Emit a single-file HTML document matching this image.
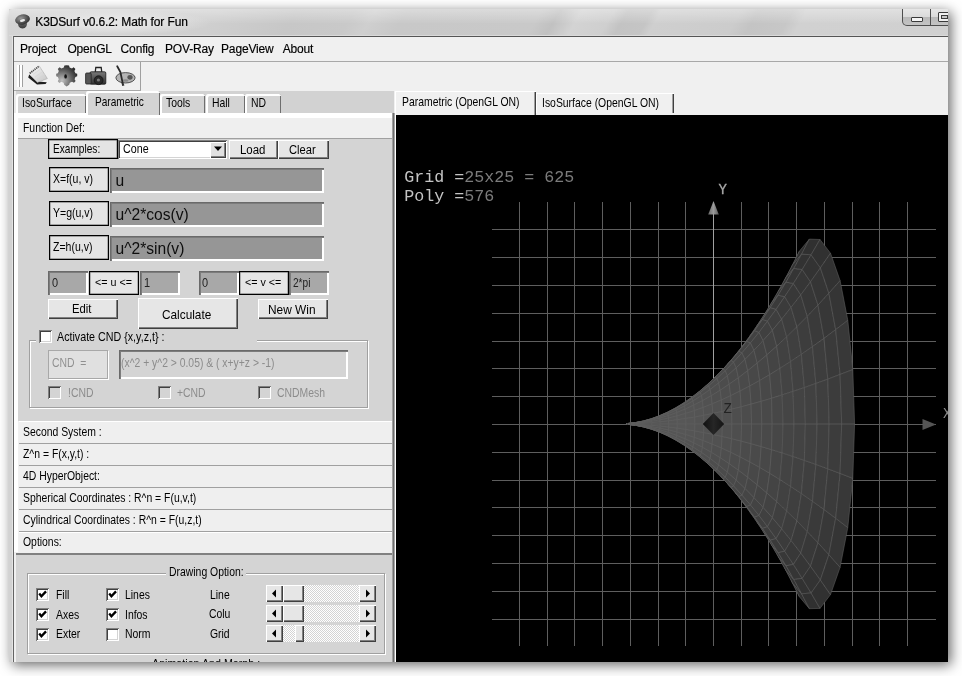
<!DOCTYPE html>
<html><head><meta charset="utf-8"><style>
html,body{margin:0;padding:0;width:962px;height:676px;overflow:hidden;background:#fff;position:relative;}
body{filter:grayscale(1);}
body>div,body>svg{position:absolute;box-sizing:border-box;}
.t{position:absolute;white-space:pre;line-height:1;font-family:"Liberation Sans",sans-serif;}
</style></head><body>
<div style="left:9px;top:9px;width:939px;height:653px;background:#d4d4d4;box-shadow:3px 3px 12px 0px rgba(0,0,0,0.6);"></div>
<div style="left:9px;top:9px;width:939px;height:27px;background:linear-gradient(120deg, #d4d4d4 0px, #cfcfcf 180px, #c7c7c7 250px, #c9c9c9 300px, #cfcfcf 318px, #c8c8c8 345px, #c9c9c9 462px, #c1c1c1 478px, #d3d3d3 497px, #cfcfcf 525px, #c3c3c3 537px, #c5c5c5 558px, #cfcfcf 566px, #cccccc 635px, #c4c4c4 650px, #c7c7c7 680px, #d1d1d1 692px, #d0d0d0 826px);box-shadow:inset 0 -1px 0 #dadada;"></div>
<div style="left:9px;top:9px;width:939px;height:27px;background:linear-gradient(to bottom, rgba(255,255,255,0.35), rgba(255,255,255,0) 55%);border-radius:3px 3px 0 0;"></div>
<div style="left:20px;top:10px;width:190px;height:25px;background:radial-gradient(ellipse at center, rgba(235,235,235,0.7) 30%, rgba(235,235,235,0) 72%);"></div>
<div style="left:9px;top:36px;width:4px;height:626px;background:#d2d2d2"></div>
<div style="left:13px;top:36px;width:935px;height:626px;background:#f0f0f0;box-shadow:inset 1px 0 0 #646464, inset 0 1px 0 #555;"></div>
<div style="left:12px;top:36px;width:1px;height:626px;background:#e4e4e4"></div>
<svg style="left:14px;top:13px" width="17" height="17" viewBox="0 0 17 17">
<defs><radialGradient id="ic1" cx="0.4" cy="0.35" r="0.7"><stop offset="0" stop-color="#9a9a9a"/><stop offset="1" stop-color="#2a2a2a"/></radialGradient>
<linearGradient id="ic2" x1="0" y1="0" x2="0" y2="1"><stop offset="0" stop-color="#6a6a6a"/><stop offset="1" stop-color="#3a3a3a"/></linearGradient></defs>
<path d="M4 9 Q3.5 15 8.5 15.5 Q13.5 15 13 9 Z" fill="url(#ic2)"/>
<ellipse cx="8.5" cy="6.5" rx="7.5" ry="5" fill="url(#ic1)" transform="rotate(-12 8.5 6.5)"/>
<ellipse cx="8.5" cy="7.5" rx="2.6" ry="1.3" fill="#e8e8e8" transform="rotate(-12 8.5 7.5)"/>
</svg>
<span class="t" style="left:35.3px;top:15.84px;font-size:12px;color:#000;font-family:'Liberation Sans', sans-serif;letter-spacing:-0.13px;-webkit-text-stroke:0.2px #000;">K3DSurf v0.6.2: Math for Fun</span>
<div style="left:902px;top:9px;width:29px;height:17px;border:1px solid #4e4e4e;border-top:none;border-radius:0 0 0 5px;background:linear-gradient(#e6e6e6,#dadada 50%,#b9b9b9 51%,#c4c4c4);"></div>
<div style="left:930px;top:9px;width:18px;height:17px;border-bottom:1px solid #4e4e4e;border-left:1px solid #4e4e4e;background:linear-gradient(#e6e6e6,#dadada 50%,#b9b9b9 51%,#c4c4c4);"></div>
<div style="left:911px;top:17px;width:12px;height:5px;border:1px solid #3a3a3a;border-radius:1px;background:#f4f4f4;"></div>
<div style="left:930px;top:9px;width:18px;height:17px;overflow:hidden"><div style="position:absolute;left:8px;top:3px;width:12px;height:10px;border:1px solid #3a3a3a;border-radius:1px;background:#f0f0f0;box-sizing:border-box"></div><div style="position:absolute;left:11px;top:6px;width:7px;height:4px;border:1px solid #3a3a3a;background:#c8c8c8;box-sizing:border-box"></div></div>
<div style="left:14px;top:61px;width:934px;height:1px;background:#a8a8a8"></div>
<span class="t" style="left:20px;top:43.04px;font-size:12px;color:#000;font-family:'Liberation Sans', sans-serif;letter-spacing:-0.15px;-webkit-text-stroke:0.15px #000;">Project</span>
<span class="t" style="left:67.4px;top:43.04px;font-size:12px;color:#000;font-family:'Liberation Sans', sans-serif;letter-spacing:-0.15px;-webkit-text-stroke:0.15px #000;">OpenGL</span>
<span class="t" style="left:120.6px;top:43.04px;font-size:12px;color:#000;font-family:'Liberation Sans', sans-serif;letter-spacing:-0.15px;-webkit-text-stroke:0.15px #000;">Config</span>
<span class="t" style="left:165px;top:43.04px;font-size:12px;color:#000;font-family:'Liberation Sans', sans-serif;letter-spacing:-0.15px;-webkit-text-stroke:0.15px #000;">POV-Ray</span>
<span class="t" style="left:221px;top:43.04px;font-size:12px;color:#000;font-family:'Liberation Sans', sans-serif;letter-spacing:-0.15px;-webkit-text-stroke:0.15px #000;">PageView</span>
<span class="t" style="left:282.7px;top:43.04px;font-size:12px;color:#000;font-family:'Liberation Sans', sans-serif;letter-spacing:-0.15px;-webkit-text-stroke:0.15px #000;">About</span>
<div style="left:14px;top:62px;width:127px;height:29px;border-right:1px solid #a0a0a0;border-bottom:1px solid #a0a0a0;"></div>
<div style="left:17px;top:65px;width:2px;height:22px;background:#fff;box-shadow:1px 0 0 #a0a0a0"></div>
<div style="left:20px;top:65px;width:2px;height:22px;background:#fff;box-shadow:1px 0 0 #a0a0a0"></div>
<svg style="left:24px;top:62px" width="116" height="28" viewBox="24 62 116 28">
<defs>
<linearGradient id="np" x1="0" y1="0" x2="1" y2="1"><stop offset="0" stop-color="#fafafa"/><stop offset="1" stop-color="#c4c4c4"/></linearGradient>
<radialGradient id="gr" cx="0.28" cy="0.72" r="0.95"><stop offset="0" stop-color="#c0c0c0"/><stop offset="0.5" stop-color="#606060"/><stop offset="1" stop-color="#0a0a0a"/></radialGradient>
<linearGradient id="cm" x1="0" y1="0" x2="0" y2="1"><stop offset="0" stop-color="#7a7a7a"/><stop offset="1" stop-color="#303030"/></linearGradient>
</defs>
<path d="M28.2 77.5 L37 84.6 L45.6 84 L46.8 82.2 L37.6 81.4 L29.2 74.6 Z" fill="#1e1e1e"/>
<path d="M29.2 74.2 L39.4 66.2 L47.4 78.6 L37.4 82.4 Z" fill="url(#np)" stroke="#a0a0a0" stroke-width="0.5"/>
<path d="M29.8 73.2 L39.2 66" stroke="#444" stroke-width="1.8" stroke-dasharray="1.1 0.9"/>
<path d="M33 74.4 L41 68.8 M35 77 L43 71.6 M37 79.6 L45 74.4" stroke="#d4d4d4" stroke-width="0.6"/>
<path d="M66.7 65.3 L69 65.6 L69.6 67.6 L72 68.6 L73.6 67.3 L75.4 69 L74.4 70.9 L75.4 73.2 L77.2 73.8 L77.2 76.3 L75.4 77 L74.6 79.2 L75.6 81 L74 82.8 L72 81.8 L69.8 82.8 L69.2 84.8 L66.6 86.4 L64.2 84.8 L63.6 82.8 L61.4 81.8 L59.4 83 L57.8 81.2 L58.8 79.2 L57.9 77 L56.2 76.3 L56.2 73.8 L57.9 73.2 L58.8 70.9 L57.8 69 L59.6 67.3 L61.4 68.6 L63.8 67.6 L64.4 65.6 Z" fill="url(#gr)"/>
<ellipse cx="65.6" cy="76.4" rx="1.3" ry="2.2" fill="#111"/>
<path d="M95.2 72.5 L95.8 67.5 L101.2 67.5 L101.8 72.5 Z" fill="none" stroke="#222" stroke-width="1.3"/>
<rect x="90" y="71.8" width="15.8" height="12.4" rx="1.2" fill="url(#cm)" stroke="#1a1a1a" stroke-width="0.8"/>
<rect x="85.6" y="73" width="5.6" height="11" rx="1" fill="#555" stroke="#222" stroke-width="0.8"/>
<circle cx="98.6" cy="80.2" r="4.4" fill="#2a2a2a" stroke="#111" stroke-width="0.8"/>
<circle cx="98.4" cy="80" r="1.6" fill="#777"/>
<ellipse cx="125.5" cy="77.8" rx="9.6" ry="5.2" fill="#b4b4b4" stroke="#444" stroke-width="0.9"/>
<ellipse cx="130" cy="77.3" rx="2.6" ry="2.4" fill="#555"/>
<ellipse cx="125.5" cy="80.5" rx="3" ry="1.2" fill="#8a8a8a"/>
<path d="M117.2 66.2 L120.4 72 L123 84.6" fill="none" stroke="#2a2a2a" stroke-width="1.8" stroke-linecap="round"/>
<path d="M121.2 81.5 L124.6 85.2 L122.2 86" fill="#333"/>
</svg>
<div style="left:14px;top:90px;width:127px;height:1px;background:#a8a8a8"></div>
<div style="left:16px;top:91px;width:378px;height:22px;background:#d2d2d2"></div>
<div style="left:14px;top:91px;width:2px;height:22px;background:#ececec"></div>
<div style="left:16px;top:93.5px;width:70px;height:19.5px;background:#d4d4d4;border-radius:2px 2px 0 0;box-shadow:inset 2px 2px 0 #fff, inset -1px 0 0 #6e6e6e;"></div>
<div style="left:159.5px;top:93.5px;width:45px;height:19.5px;background:#d4d4d4;border-radius:2px 2px 0 0;box-shadow:inset 2px 2px 0 #fff, inset -1px 0 0 #6e6e6e;"></div>
<div style="left:205.5px;top:93.5px;width:39px;height:19.5px;background:#d4d4d4;border-radius:2px 2px 0 0;box-shadow:inset 2px 2px 0 #fff, inset -1px 0 0 #6e6e6e;"></div>
<div style="left:245px;top:93.5px;width:36px;height:19.5px;background:#d4d4d4;border-radius:2px 2px 0 0;box-shadow:inset 2px 2px 0 #fff, inset -1px 0 0 #6e6e6e;"></div>
<div style="left:14px;top:113px;width:380px;height:5px;background:#fff"></div>
<div style="left:86px;top:91px;width:73.5px;height:24px;background:#d4d4d4;border-radius:2px 2px 0 0;box-shadow:inset 2px 2px 0 #fff, inset -1px 0 0 #6e6e6e;"></div>
<span class="t" style="left:21.8px;top:97.73px;font-size:11.9px;color:#000;font-family:'Liberation Sans', sans-serif;transform:scaleX(0.875);transform-origin:0 0;">IsoSurface</span>
<span class="t" style="left:94.6px;top:96.53px;font-size:11.9px;color:#000;font-family:'Liberation Sans', sans-serif;transform:scaleX(0.85);transform-origin:0 0;">Parametric</span>
<span class="t" style="left:165.7px;top:98.13px;font-size:11.9px;color:#000;font-family:'Liberation Sans', sans-serif;transform:scaleX(0.875);transform-origin:0 0;">Tools</span>
<span class="t" style="left:212.4px;top:98.13px;font-size:11.9px;color:#000;font-family:'Liberation Sans', sans-serif;transform:scaleX(0.875);transform-origin:0 0;">Hall</span>
<span class="t" style="left:250.8px;top:98.13px;font-size:11.9px;color:#000;font-family:'Liberation Sans', sans-serif;transform:scaleX(0.875);transform-origin:0 0;">ND</span>
<div style="left:392px;top:113px;width:1px;height:549px;background:#a0a0a0"></div>
<div style="left:393px;top:113px;width:1px;height:549px;background:#6e6e6e"></div>
<div style="left:394px;top:113px;width:1px;height:549px;background:#a8a8a8"></div>
<div style="left:395px;top:91px;width:1px;height:571px;background:#fff"></div>
<div style="left:14px;top:113px;width:4px;height:439px;background:#fff"></div>
<div style="left:19px;top:118px;width:373px;height:20px;background:#efefef"></div>
<span class="t" style="left:23.4px;top:123.33px;font-size:11.9px;color:#000;font-family:'Liberation Sans', sans-serif;transform:scaleX(0.875);transform-origin:0 0;">Function Def:</span>
<div style="left:18px;top:138px;width:374px;height:283px;background:#d4d4d4;border-top:1px solid #a0a0a0"></div>
<div style="left:48px;top:139px;width:70px;height:20px;background:#e4e4e4;box-shadow:inset 0 0 0 1px #000, inset 0 0 0 1.4px #606060;"></div>
<span class="t" style="left:52.5px;top:144.13px;font-size:11.9px;color:#000;font-family:'Liberation Sans', sans-serif;transform:scaleX(0.85);transform-origin:0 0;">Examples:</span>
<div style="left:118px;top:139.5px;width:109px;height:19.5px;background:#fff;box-shadow:inset 1px 1px 0 #808080, inset -1px -1px 0 #fff, inset 2px 2px 0 #404040, inset -2px -2px 0 #d4d4d4;"></div>
<div style="left:210px;top:141.5px;width:16px;height:16px;background:#e0e0e0;box-shadow:inset 1px 1px 0 #fff, inset -1px -1px 0 #404040, inset -2px -2px 0 #808080;"></div>
<svg style="left:213px;top:146px" width="10" height="6"><path d="M1 0.5 L9 0.5 L5 5 Z" fill="#000"/></svg>
<span class="t" style="left:123px;top:144.13px;font-size:11.9px;color:#000;font-family:'Liberation Sans', sans-serif;transform:scaleX(0.9);transform-origin:0 0;">Cone</span>
<div style="left:228.5px;top:139.5px;width:49px;height:19.5px;background:#e6e6e6;box-shadow:inset 1px 1px 0 #fff, inset -1px -1px 0 #404040, inset -2px -2px 0 #808080;"></div>
<div style="left:277.5px;top:139.5px;width:51px;height:19.5px;background:#e6e6e6;box-shadow:inset 1px 1px 0 #fff, inset -1px -1px 0 #404040, inset -2px -2px 0 #808080;"></div>
<span class="t" style="left:239.5px;top:144.04px;font-size:12px;color:#000;font-family:'Liberation Sans', sans-serif;transform:scaleX(0.955);transform-origin:0 0;">Load</span>
<span class="t" style="left:288.7px;top:144.04px;font-size:12px;color:#000;font-family:'Liberation Sans', sans-serif;transform:scaleX(0.93);transform-origin:0 0;">Clear</span>
<div style="left:49px;top:167.3px;width:60px;height:24.5px;background:#e4e4e4;box-shadow:inset 0 0 0 1px #000, inset 0 0 0 1.4px #606060;"></div>
<span class="t" style="left:52.5px;top:174.03px;font-size:11.9px;color:#000;font-family:'Liberation Sans', sans-serif;transform:scaleX(0.885);transform-origin:0 0;">X=f(u, v)</span>
<div style="left:110.2px;top:168.10000000000002px;width:213.8px;height:25px;background:#969696;box-shadow:inset 1px 1px 0 #6a6a6a, inset 2px 2px 0 #7c7c7c, inset -2px -2px 0 #fff;"></div>
<span class="t" style="left:115.5px;top:173.29px;font-size:15.6px;color:#0e0e0e;font-family:'Liberation Sans', sans-serif;">u</span>
<div style="left:49px;top:201.3px;width:60px;height:24.5px;background:#e4e4e4;box-shadow:inset 0 0 0 1px #000, inset 0 0 0 1.4px #606060;"></div>
<span class="t" style="left:52.5px;top:208.03px;font-size:11.9px;color:#000;font-family:'Liberation Sans', sans-serif;transform:scaleX(0.885);transform-origin:0 0;">Y=g(u,v)</span>
<div style="left:110.2px;top:202.10000000000002px;width:213.8px;height:25px;background:#969696;box-shadow:inset 1px 1px 0 #6a6a6a, inset 2px 2px 0 #7c7c7c, inset -2px -2px 0 #fff;"></div>
<span class="t" style="left:115.5px;top:207.29px;font-size:15.6px;color:#0e0e0e;font-family:'Liberation Sans', sans-serif;">u^2*cos(v)</span>
<div style="left:49px;top:235.3px;width:60px;height:24.5px;background:#e4e4e4;box-shadow:inset 0 0 0 1px #000, inset 0 0 0 1.4px #606060;"></div>
<span class="t" style="left:52.5px;top:242.03px;font-size:11.9px;color:#000;font-family:'Liberation Sans', sans-serif;transform:scaleX(0.885);transform-origin:0 0;">Z=h(u,v)</span>
<div style="left:110.2px;top:236.10000000000002px;width:213.8px;height:25px;background:#969696;box-shadow:inset 1px 1px 0 #6a6a6a, inset 2px 2px 0 #7c7c7c, inset -2px -2px 0 #fff;"></div>
<span class="t" style="left:115.5px;top:241.29px;font-size:15.6px;color:#0e0e0e;font-family:'Liberation Sans', sans-serif;">u^2*sin(v)</span>
<div style="left:48px;top:270.5px;width:40px;height:24px;background:#a8a8a8;box-shadow:inset 1px 1px 0 #6a6a6a, inset 2px 2px 0 #7c7c7c, inset -2px -2px 0 #fff;"></div>
<span class="t" style="left:51.6px;top:277.73px;font-size:11.9px;color:#222;font-family:'Liberation Sans', sans-serif;transform:scaleX(0.92);transform-origin:0 0;">0</span>
<div style="left:89px;top:270.5px;width:50px;height:24px;background:#e6e6e6;box-shadow:inset 0 0 0 1px #000, inset 0 0 0 1.4px #606060;"></div>
<span class="t" style="left:95.4px;top:277.27px;font-size:11.5px;color:#000;font-family:'Liberation Sans', sans-serif;transform:scaleX(0.93);transform-origin:0 0;">&lt;= u &lt;=</span>
<div style="left:139.5px;top:270.5px;width:40.5px;height:24px;background:#a8a8a8;box-shadow:inset 1px 1px 0 #6a6a6a, inset 2px 2px 0 #7c7c7c, inset -2px -2px 0 #fff;"></div>
<span class="t" style="left:144px;top:277.73px;font-size:11.9px;color:#222;font-family:'Liberation Sans', sans-serif;transform:scaleX(0.92);transform-origin:0 0;">1</span>
<div style="left:198.5px;top:270.5px;width:40px;height:24px;background:#a8a8a8;box-shadow:inset 1px 1px 0 #6a6a6a, inset 2px 2px 0 #7c7c7c, inset -2px -2px 0 #fff;"></div>
<span class="t" style="left:201.8px;top:277.73px;font-size:11.9px;color:#222;font-family:'Liberation Sans', sans-serif;transform:scaleX(0.92);transform-origin:0 0;">0</span>
<div style="left:239px;top:270.5px;width:50px;height:24px;background:#e6e6e6;box-shadow:inset 0 0 0 1px #000, inset 0 0 0 1.4px #606060;"></div>
<span class="t" style="left:244.7px;top:277.27px;font-size:11.5px;color:#000;font-family:'Liberation Sans', sans-serif;transform:scaleX(0.93);transform-origin:0 0;">&lt;= v &lt;=</span>
<div style="left:289.3px;top:270.5px;width:39.5px;height:24px;background:#a8a8a8;box-shadow:inset 1px 1px 0 #6a6a6a, inset 2px 2px 0 #7c7c7c, inset -2px -2px 0 #fff;"></div>
<span class="t" style="left:292.7px;top:277.73px;font-size:11.9px;color:#222;font-family:'Liberation Sans', sans-serif;transform:scaleX(0.85);transform-origin:0 0;">2*pi</span>
<div style="left:48px;top:299px;width:70px;height:20px;background:#e6e6e6;box-shadow:inset 1px 1px 0 #fff, inset -1px -1px 0 #404040, inset -2px -2px 0 #808080;"></div>
<span class="t" style="left:72.4px;top:303.24px;font-size:12px;color:#000;font-family:'Liberation Sans', sans-serif;transform:scaleX(0.94);transform-origin:0 0;">Edit</span>
<div style="left:137.7px;top:298.4px;width:100.5px;height:30.5px;background:#e6e6e6;box-shadow:inset 1px 1px 0 #fff, inset -1px -1px 0 #404040, inset -2px -2px 0 #808080;"></div>
<span class="t" style="left:162.4px;top:309.47px;font-size:12.2px;color:#000;font-family:'Liberation Sans', sans-serif;transform:scaleX(0.97);transform-origin:0 0;">Calculate</span>
<div style="left:257.7px;top:298.8px;width:70.5px;height:20px;background:#e6e6e6;box-shadow:inset 1px 1px 0 #fff, inset -1px -1px 0 #404040, inset -2px -2px 0 #808080;"></div>
<span class="t" style="left:268px;top:303.84px;font-size:12px;color:#000;font-family:'Liberation Sans', sans-serif;transform:scaleX(0.99);transform-origin:0 0;">New Win</span>
<div style="left:28.5px;top:340px;width:339px;height:67.8px;border:1px solid #a0a0a0;box-shadow:1px 1px 0 #fff, inset 1px 1px 0 #fff;"></div>
<div style="left:36px;top:336px;width:221px;height:8px;background:#d4d4d4"></div>
<div style="left:38.9px;top:330.3px;width:13px;height:13px;background:#fff;box-shadow:inset 1px 1px 0 #808080, inset -1px -1px 0 #fff, inset 2px 2px 0 #404040, inset -2px -2px 0 #d4d4d4;"></div>
<span class="t" style="left:57px;top:331.73px;font-size:11.9px;color:#000;font-family:'Liberation Sans', sans-serif;transform:scaleX(0.9);transform-origin:0 0;">Activate CND {x,y,z,t} :</span>
<div style="left:48px;top:350px;width:59.5px;height:28.5px;background:#e0e0e0;box-shadow:inset 0 0 0 1px #000, inset 0 0 0 1.4px #606060;"></div>
<div style="left:48px;top:350px;width:59.5px;height:28.5px;border:1px solid #a8a8a8;box-shadow:1px 1px 0 #fff;background:#e0e0e0"></div>
<div style="left:118.5px;top:350px;width:229.5px;height:28.5px;background:#d4d4d4;box-shadow:inset 1px 1px 0 #6a6a6a, inset 2px 2px 0 #7c7c7c, inset -2px -2px 0 #fff;"></div>
<span class="t" style="left:51.6px;top:358.13px;font-size:11.9px;color:#909090;font-family:'Liberation Sans', sans-serif;transform:scaleX(0.875);transform-origin:0 0;">CND  =</span>
<span class="t" style="left:121.2px;top:358.13px;font-size:11.9px;color:#8c8c8c;font-family:'Liberation Sans', sans-serif;transform:scaleX(0.872);transform-origin:0 0;">(x^2 + y^2 &gt; 0.05) &amp; ( x+y+z &gt; -1)</span>
<div style="left:48px;top:386px;width:13px;height:13px;background:#d4d4d4;box-shadow:inset 1px 1px 0 #808080, inset -1px -1px 0 #fff, inset 2px 2px 0 #404040, inset -2px -2px 0 #d4d4d4;"></div>
<div style="left:158.2px;top:386px;width:13px;height:13px;background:#d4d4d4;box-shadow:inset 1px 1px 0 #808080, inset -1px -1px 0 #fff, inset 2px 2px 0 #404040, inset -2px -2px 0 #d4d4d4;"></div>
<div style="left:258.4px;top:386px;width:13px;height:13px;background:#d4d4d4;box-shadow:inset 1px 1px 0 #808080, inset -1px -1px 0 #fff, inset 2px 2px 0 #404040, inset -2px -2px 0 #d4d4d4;"></div>
<span class="t" style="left:68px;top:387.63px;font-size:11.9px;color:#8c8c8c;font-family:'Liberation Sans', sans-serif;transform:scaleX(0.875);transform-origin:0 0;">!CND</span>
<span class="t" style="left:177.1px;top:387.63px;font-size:11.9px;color:#8c8c8c;font-family:'Liberation Sans', sans-serif;transform:scaleX(0.875);transform-origin:0 0;">+CND</span>
<span class="t" style="left:276.6px;top:387.63px;font-size:11.9px;color:#8c8c8c;font-family:'Liberation Sans', sans-serif;transform:scaleX(0.875);transform-origin:0 0;">CNDMesh</span>
<div style="left:19px;top:421px;width:373px;height:1px;background:#fff"></div>
<div style="left:19px;top:422.0px;width:373px;height:21px;background:#efefef"></div>
<div style="left:19px;top:442.5px;width:373px;height:1px;background:#a0a0a0"></div>
<div style="left:19px;top:443.5px;width:373px;height:1px;background:#fff"></div>
<span class="t" style="left:22.9px;top:427.13px;font-size:11.9px;color:#000;font-family:'Liberation Sans', sans-serif;transform:scaleX(0.875);transform-origin:0 0;">Second System :</span>
<div style="left:19px;top:444.1px;width:373px;height:21px;background:#efefef"></div>
<div style="left:19px;top:464.6px;width:373px;height:1px;background:#a0a0a0"></div>
<div style="left:19px;top:465.6px;width:373px;height:1px;background:#fff"></div>
<span class="t" style="left:22.9px;top:449.13px;font-size:11.9px;color:#000;font-family:'Liberation Sans', sans-serif;transform:scaleX(0.875);transform-origin:0 0;">Z^n = F(x,y,t) :</span>
<div style="left:19px;top:466.2px;width:373px;height:21px;background:#efefef"></div>
<div style="left:19px;top:486.7px;width:373px;height:1px;background:#a0a0a0"></div>
<div style="left:19px;top:487.7px;width:373px;height:1px;background:#fff"></div>
<span class="t" style="left:22.9px;top:471.13px;font-size:11.9px;color:#000;font-family:'Liberation Sans', sans-serif;transform:scaleX(0.875);transform-origin:0 0;">4D HyperObject:</span>
<div style="left:19px;top:488.3px;width:373px;height:21px;background:#efefef"></div>
<div style="left:19px;top:508.8px;width:373px;height:1px;background:#a0a0a0"></div>
<div style="left:19px;top:509.8px;width:373px;height:1px;background:#fff"></div>
<span class="t" style="left:22.9px;top:493.13px;font-size:11.9px;color:#000;font-family:'Liberation Sans', sans-serif;transform:scaleX(0.875);transform-origin:0 0;">Spherical Coordinates : R^n = F(u,v,t)</span>
<div style="left:19px;top:510.4px;width:373px;height:21px;background:#efefef"></div>
<div style="left:19px;top:530.9px;width:373px;height:1px;background:#a0a0a0"></div>
<div style="left:19px;top:531.9px;width:373px;height:1px;background:#fff"></div>
<span class="t" style="left:22.9px;top:515.13px;font-size:11.9px;color:#000;font-family:'Liberation Sans', sans-serif;transform:scaleX(0.875);transform-origin:0 0;">Cylindrical Coordinates : R^n = F(u,z,t)</span>
<div style="left:19px;top:532.5px;width:373px;height:21px;background:#efefef"></div>
<div style="left:19px;top:553.0px;width:373px;height:1px;background:#a0a0a0"></div>
<div style="left:19px;top:554.0px;width:373px;height:1px;background:#fff"></div>
<span class="t" style="left:22.9px;top:537.13px;font-size:11.9px;color:#000;font-family:'Liberation Sans', sans-serif;transform:scaleX(0.875);transform-origin:0 0;">Options:</span>
<div style="left:16px;top:552.5px;width:376px;height:1px;background:#a0a0a0"></div>
<div style="left:16px;top:553px;width:376px;height:2px;background:#808080"></div>
<div style="left:16px;top:555px;width:376px;height:107px;background:#d4d4d4"></div>
<div style="left:26.5px;top:573px;width:358.5px;height:81px;border:1px solid #a0a0a0;box-shadow:1px 1px 0 #fff, inset 1px 1px 0 #fff;"></div>
<div style="left:166px;top:568px;width:80px;height:8px;background:#d4d4d4"></div>
<span class="t" style="left:168.8px;top:566.93px;font-size:11.9px;color:#000;font-family:'Liberation Sans', sans-serif;transform:scaleX(0.875);transform-origin:0 0;">Drawing Option:</span>
<div style="left:36.2px;top:588.2px;width:13px;height:13px;background:#fff;box-shadow:inset 1px 1px 0 #808080, inset -1px -1px 0 #fff, inset 2px 2px 0 #404040, inset -2px -2px 0 #d4d4d4;"></div>
<svg style="left:36.2px;top:588.2px" width="13" height="13"><path d="M3.2 5.6 L5.4 8.3 L10 3.4" fill="none" stroke="#000" stroke-width="2.3"/></svg>
<div style="left:106px;top:588.2px;width:13px;height:13px;background:#fff;box-shadow:inset 1px 1px 0 #808080, inset -1px -1px 0 #fff, inset 2px 2px 0 #404040, inset -2px -2px 0 #d4d4d4;"></div>
<svg style="left:106px;top:588.2px" width="13" height="13"><path d="M3.2 5.6 L5.4 8.3 L10 3.4" fill="none" stroke="#000" stroke-width="2.3"/></svg>
<span class="t" style="left:55.5px;top:589.83px;font-size:11.9px;color:#000;font-family:'Liberation Sans', sans-serif;transform:scaleX(0.875);transform-origin:0 0;">Fill</span>
<span class="t" style="left:125.1px;top:589.83px;font-size:11.9px;color:#000;font-family:'Liberation Sans', sans-serif;transform:scaleX(0.875);transform-origin:0 0;">Lines</span>
<div style="left:36.2px;top:608.0px;width:13px;height:13px;background:#fff;box-shadow:inset 1px 1px 0 #808080, inset -1px -1px 0 #fff, inset 2px 2px 0 #404040, inset -2px -2px 0 #d4d4d4;"></div>
<svg style="left:36.2px;top:608.0px" width="13" height="13"><path d="M3.2 5.6 L5.4 8.3 L10 3.4" fill="none" stroke="#000" stroke-width="2.3"/></svg>
<div style="left:106px;top:608.0px;width:13px;height:13px;background:#fff;box-shadow:inset 1px 1px 0 #808080, inset -1px -1px 0 #fff, inset 2px 2px 0 #404040, inset -2px -2px 0 #d4d4d4;"></div>
<svg style="left:106px;top:608.0px" width="13" height="13"><path d="M3.2 5.6 L5.4 8.3 L10 3.4" fill="none" stroke="#000" stroke-width="2.3"/></svg>
<span class="t" style="left:55.5px;top:609.63px;font-size:11.9px;color:#000;font-family:'Liberation Sans', sans-serif;transform:scaleX(0.875);transform-origin:0 0;">Axes</span>
<span class="t" style="left:125.1px;top:609.63px;font-size:11.9px;color:#000;font-family:'Liberation Sans', sans-serif;transform:scaleX(0.875);transform-origin:0 0;">Infos</span>
<div style="left:36.2px;top:627.8000000000001px;width:13px;height:13px;background:#fff;box-shadow:inset 1px 1px 0 #808080, inset -1px -1px 0 #fff, inset 2px 2px 0 #404040, inset -2px -2px 0 #d4d4d4;"></div>
<svg style="left:36.2px;top:627.8000000000001px" width="13" height="13"><path d="M3.2 5.6 L5.4 8.3 L10 3.4" fill="none" stroke="#000" stroke-width="2.3"/></svg>
<div style="left:106px;top:627.8000000000001px;width:13px;height:13px;background:#fff;box-shadow:inset 1px 1px 0 #808080, inset -1px -1px 0 #fff, inset 2px 2px 0 #404040, inset -2px -2px 0 #d4d4d4;"></div>
<span class="t" style="left:55.5px;top:629.43px;font-size:11.9px;color:#000;font-family:'Liberation Sans', sans-serif;transform:scaleX(0.875);transform-origin:0 0;">Exter</span>
<span class="t" style="left:125.1px;top:629.43px;font-size:11.9px;color:#000;font-family:'Liberation Sans', sans-serif;transform:scaleX(0.875);transform-origin:0 0;">Norm</span>
<span class="t" style="left:210px;top:589.63px;font-size:11.9px;color:#000;font-family:'Liberation Sans', sans-serif;transform:scaleX(0.875);transform-origin:0 0;">Line</span>
<div style="left:282px;top:585.0px;width:78px;height:17px;background-color:#fff;background-image:repeating-conic-gradient(#d4d4d4 0 25%, #fff 0 50%);background-size:2px 2px;"></div>
<div style="left:266px;top:585.0px;width:16.5px;height:17px;background:#e6e6e6;box-shadow:inset 1px 1px 0 #fff, inset -1px -1px 0 #404040, inset -2px -2px 0 #808080;"></div>
<div style="left:359.2px;top:585.0px;width:16.5px;height:17px;background:#e6e6e6;box-shadow:inset 1px 1px 0 #fff, inset -1px -1px 0 #404040, inset -2px -2px 0 #808080;"></div>
<svg style="left:266px;top:585.0px" width="17" height="17"><path d="M6 8.5 L10 4.5 L10 12.5 Z" fill="#000"/></svg>
<svg style="left:359.2px;top:585.0px" width="17" height="17"><path d="M7 4.5 L11 8.5 L7 12.5 Z" fill="#000"/></svg>
<div style="left:282.9px;top:585.0px;width:21px;height:17px;background:#e6e6e6;box-shadow:inset 1px 1px 0 #fff, inset -1px -1px 0 #404040, inset -2px -2px 0 #808080;"></div>
<span class="t" style="left:208.5px;top:609.43px;font-size:11.9px;color:#000;font-family:'Liberation Sans', sans-serif;transform:scaleX(0.875);transform-origin:0 0;">Colu</span>
<div style="left:282px;top:604.9px;width:78px;height:17px;background-color:#fff;background-image:repeating-conic-gradient(#d4d4d4 0 25%, #fff 0 50%);background-size:2px 2px;"></div>
<div style="left:266px;top:604.9px;width:16.5px;height:17px;background:#e6e6e6;box-shadow:inset 1px 1px 0 #fff, inset -1px -1px 0 #404040, inset -2px -2px 0 #808080;"></div>
<div style="left:359.2px;top:604.9px;width:16.5px;height:17px;background:#e6e6e6;box-shadow:inset 1px 1px 0 #fff, inset -1px -1px 0 #404040, inset -2px -2px 0 #808080;"></div>
<svg style="left:266px;top:604.9px" width="17" height="17"><path d="M6 8.5 L10 4.5 L10 12.5 Z" fill="#000"/></svg>
<svg style="left:359.2px;top:604.9px" width="17" height="17"><path d="M7 4.5 L11 8.5 L7 12.5 Z" fill="#000"/></svg>
<div style="left:282.9px;top:604.9px;width:21px;height:17px;background:#e6e6e6;box-shadow:inset 1px 1px 0 #fff, inset -1px -1px 0 #404040, inset -2px -2px 0 #808080;"></div>
<span class="t" style="left:209.5px;top:629.23px;font-size:11.9px;color:#000;font-family:'Liberation Sans', sans-serif;transform:scaleX(0.875);transform-origin:0 0;">Grid</span>
<div style="left:282px;top:624.8px;width:78px;height:17px;background-color:#fff;background-image:repeating-conic-gradient(#d4d4d4 0 25%, #fff 0 50%);background-size:2px 2px;"></div>
<div style="left:266px;top:624.8px;width:16.5px;height:17px;background:#e6e6e6;box-shadow:inset 1px 1px 0 #fff, inset -1px -1px 0 #404040, inset -2px -2px 0 #808080;"></div>
<div style="left:359.2px;top:624.8px;width:16.5px;height:17px;background:#e6e6e6;box-shadow:inset 1px 1px 0 #fff, inset -1px -1px 0 #404040, inset -2px -2px 0 #808080;"></div>
<svg style="left:266px;top:624.8px" width="17" height="17"><path d="M6 8.5 L10 4.5 L10 12.5 Z" fill="#000"/></svg>
<svg style="left:359.2px;top:624.8px" width="17" height="17"><path d="M7 4.5 L11 8.5 L7 12.5 Z" fill="#000"/></svg>
<div style="left:294.8px;top:624.8px;width:9px;height:17px;background:#e6e6e6;box-shadow:inset 1px 1px 0 #fff, inset -1px -1px 0 #404040, inset -2px -2px 0 #808080;"></div>
<div style="left:16px;top:655px;width:376px;height:7px;overflow:hidden;"><span class="t" style="left:136px;top:2.94px;font-size:10.7px;color:#000">Animation And Morph :</span></div>
<div style="left:536px;top:93.3px;width:138px;height:20px;background:#f0f0f0;box-shadow:inset 1px 1px 0 #fff, inset -1px 0 0 #404040, inset -2px 0 0 #a0a0a0;"></div>
<div style="left:395px;top:91px;width:141px;height:24px;background:#f0f0f0;box-shadow:inset 1px 1px 0 #fff, inset -1px 0 0 #404040, inset -2px 0 0 #a0a0a0;"></div>
<span class="t" style="left:402.4px;top:96.53px;font-size:11.9px;color:#000;font-family:'Liberation Sans', sans-serif;transform:scaleX(0.875);transform-origin:0 0;">Parametric (OpenGL ON)</span>
<span class="t" style="left:541.6px;top:97.93px;font-size:11.9px;color:#000;font-family:'Liberation Sans', sans-serif;transform:scaleX(0.875);transform-origin:0 0;">IsoSurface (OpenGL ON)</span>
<svg style="left:396px;top:115px" width="552" height="547" viewBox="396 115 552 547">
<rect x="396" y="115" width="552" height="547" fill="#000"/>
<g stroke="#5e5e5e" stroke-width="1" shape-rendering="crispEdges">
<line x1="519.5" y1="202" x2="519.5" y2="646"/>
<line x1="547.5" y1="202" x2="547.5" y2="646"/>
<line x1="574.5" y1="202" x2="574.5" y2="646"/>
<line x1="602.5" y1="202" x2="602.5" y2="646"/>
<line x1="630.5" y1="202" x2="630.5" y2="646"/>
<line x1="658.5" y1="202" x2="658.5" y2="646"/>
<line x1="685.5" y1="202" x2="685.5" y2="646"/>
<line x1="713.5" y1="202" x2="713.5" y2="646"/>
<line x1="741.5" y1="202" x2="741.5" y2="646"/>
<line x1="768.5" y1="202" x2="768.5" y2="646"/>
<line x1="796.5" y1="202" x2="796.5" y2="646"/>
<line x1="824.5" y1="202" x2="824.5" y2="646"/>
<line x1="852.5" y1="202" x2="852.5" y2="646"/>
<line x1="879.5" y1="202" x2="879.5" y2="646"/>
<line x1="907.5" y1="202" x2="907.5" y2="646"/>
<line x1="492" y1="229.5" x2="936" y2="229.5"/>
<line x1="492" y1="257.5" x2="936" y2="257.5"/>
<line x1="492" y1="285.5" x2="936" y2="285.5"/>
<line x1="492" y1="313.5" x2="936" y2="313.5"/>
<line x1="492" y1="341.5" x2="936" y2="341.5"/>
<line x1="492" y1="368.5" x2="936" y2="368.5"/>
<line x1="492" y1="396.5" x2="936" y2="396.5"/>
<line x1="492" y1="424.5" x2="936" y2="424.5"/>
<line x1="492" y1="452.5" x2="936" y2="452.5"/>
<line x1="492" y1="480.5" x2="936" y2="480.5"/>
<line x1="492" y1="507.5" x2="936" y2="507.5"/>
<line x1="492" y1="535.5" x2="936" y2="535.5"/>
<line x1="492" y1="563.5" x2="936" y2="563.5"/>
<line x1="492" y1="591.5" x2="936" y2="591.5"/>
<line x1="492" y1="619.5" x2="936" y2="619.5"/>
</g>
<line x1="713.5" y1="214" x2="713.5" y2="424" stroke="#a0a0a0" stroke-width="1" shape-rendering="crispEdges"/>
<path d="M713.5 201 L708.2 214.5 L718.8 214.5 Z" fill="url(#ag)"/>
<path d="M936 424.5 L922.5 419 L922.5 430 Z" fill="#555"/>
<clipPath id="mclip"><rect x="626" y="115" width="322" height="547"/></clipPath><g clip-path="url(#mclip)"><g transform="translate(0 423.8) scale(1 0.993) translate(0 -423.2)"><g stroke="#626262" stroke-width="0.55" stroke-linejoin="round"><polygon points="770.8,383.5 775.3,380.3 774.2,423.3 769.8,423.3" fill="#434343"/><polygon points="769.8,423.3 774.2,423.3 775.3,466.3 770.8,463.2" fill="#434343"/><polygon points="770.8,463.2 775.3,466.3 778.5,507.3 773.7,501.1" fill="#404040"/><polygon points="773.7,345.5 778.5,339.4 775.3,380.3 770.8,383.5" fill="#404040"/><polygon points="765.2,423.3 769.8,423.3 770.8,463.2 766.0,460.1" fill="#444444"/><polygon points="766.0,386.5 770.8,383.5 769.8,423.3 765.2,423.3" fill="#444444"/><polygon points="766.0,460.1 770.8,463.2 773.7,501.1 768.7,495.1" fill="#414141"/><polygon points="768.7,351.5 773.7,345.5 770.8,383.5 766.0,386.5" fill="#414141"/><polygon points="760.3,423.3 765.2,423.3 766.0,460.1 761.1,457.2" fill="#444444"/><polygon points="761.1,389.5 766.0,386.5 765.2,423.3 760.3,423.3" fill="#444444"/><polygon points="778.4,311.4 783.7,302.4 778.5,339.4 773.7,345.5" fill="#3b3b3b"/><polygon points="773.7,501.1 778.5,507.3 783.7,544.3 778.4,535.2" fill="#3c3c3c"/><polygon points="761.1,457.2 766.0,460.1 768.7,495.1 763.5,489.3" fill="#424242"/><polygon points="763.5,357.4 768.7,351.5 766.0,386.5 761.1,389.5" fill="#424242"/><polygon points="755.3,423.3 760.3,423.3 761.1,457.2 756.0,454.3" fill="#454545"/><polygon points="756.0,392.4 761.1,389.5 760.3,423.3 755.3,423.3" fill="#454545"/><polygon points="768.7,495.1 773.7,501.1 778.4,535.2 773.0,526.4" fill="#3d3d3d"/><polygon points="773.0,320.2 778.4,311.4 773.7,345.5 768.7,351.5" fill="#3d3d3d"/><polygon points="756.0,454.3 761.1,457.2 763.5,489.3 758.2,483.6" fill="#434343"/><polygon points="758.2,363.0 763.5,357.4 761.1,389.5 756.0,392.4" fill="#434343"/><polygon points="750.7,395.2 756.0,392.4 755.3,423.3 750.1,423.3" fill="#464646"/><polygon points="750.1,423.3 755.3,423.3 756.0,454.3 750.7,451.5" fill="#464646"/><polygon points="763.5,489.3 768.7,495.1 773.0,526.4 767.4,517.9" fill="#3e3e3e"/><polygon points="767.4,328.7 773.0,320.2 768.7,351.5 763.5,357.4" fill="#3e3e3e"/><polygon points="752.6,368.5 758.2,363.0 756.0,392.4 750.7,395.2" fill="#444444"/><polygon points="750.7,451.5 756.0,454.3 758.2,483.6 752.6,478.2" fill="#444444"/><polygon points="778.4,535.2 783.7,544.3 790.8,575.0 784.8,563.4" fill="#373737"/><polygon points="784.8,283.2 790.8,271.6 783.7,302.4 778.4,311.4" fill="#373737"/><polygon points="758.2,483.6 763.5,489.3 767.4,517.9 761.6,509.7" fill="#404040"/><polygon points="761.6,337.0 767.4,328.7 763.5,357.4 758.2,363.0" fill="#404040"/><polygon points="745.3,397.8 750.7,395.2 750.1,423.3 744.7,423.3" fill="#474747"/><polygon points="744.7,423.3 750.1,423.3 750.7,451.5 745.3,448.8" fill="#474747"/><polygon points="773.0,526.4 778.4,535.2 784.8,563.4 778.8,552.2" fill="#393939"/><polygon points="778.8,294.4 784.8,283.2 778.4,311.4 773.0,320.2" fill="#393939"/><polygon points="745.3,448.8 750.7,451.5 752.6,478.2 746.9,472.9" fill="#454545"/><polygon points="746.9,373.8 752.6,368.5 750.7,395.2 745.3,397.8" fill="#454545"/><polygon points="755.7,344.9 761.6,337.0 758.2,363.0 752.6,368.5" fill="#414141"/><polygon points="752.6,478.2 758.2,483.6 761.6,509.7 755.7,501.8" fill="#414141"/><polygon points="739.1,423.3 744.7,423.3 745.3,448.8 739.6,446.2" fill="#474747"/><polygon points="739.6,400.4 745.3,397.8 744.7,423.3 739.1,423.3" fill="#474747"/><polygon points="767.4,517.9 773.0,526.4 778.8,552.2 772.6,541.4" fill="#3b3b3b"/><polygon points="772.6,305.3 778.8,294.4 773.0,320.2 767.4,328.7" fill="#3b3b3b"/><polygon points="739.6,446.2 745.3,448.8 746.9,472.9 741.1,467.9" fill="#464646"/><polygon points="741.1,378.8 746.9,373.8 745.3,397.8 739.6,400.4" fill="#464646"/><polygon points="749.6,352.5 755.7,344.9 752.6,368.5 746.9,373.8" fill="#434343"/><polygon points="746.9,472.9 752.6,478.2 755.7,501.8 749.6,494.2" fill="#434343"/><polygon points="761.6,509.7 767.4,517.9 772.6,541.4 766.3,530.9" fill="#3d3d3d"/><polygon points="766.3,315.7 772.6,305.3 767.4,328.7 761.6,337.0" fill="#3d3d3d"/><polygon points="733.7,402.9 739.6,400.4 739.1,423.3 733.3,423.3" fill="#484848"/><polygon points="733.3,423.3 739.1,423.3 739.6,446.2 733.7,443.8" fill="#484848"/><polygon points="735.0,383.6 741.1,378.8 739.6,400.4 733.7,402.9" fill="#474747"/><polygon points="733.7,443.8 739.6,446.2 741.1,467.9 735.0,463.0" fill="#474747"/><polygon points="743.4,359.8 749.6,352.5 746.9,373.8 741.1,378.8" fill="#444444"/><polygon points="741.1,467.9 746.9,472.9 749.6,494.2 743.4,486.9" fill="#444444"/><polygon points="755.7,501.8 761.6,509.7 766.3,530.9 759.8,520.9" fill="#3f3f3f"/><polygon points="759.8,325.7 766.3,315.7 761.6,337.0 755.7,344.9" fill="#3e3e3e"/><polygon points="784.8,563.4 790.8,575.0 799.5,597.5 792.7,583.8" fill="#333333"/><polygon points="792.7,262.9 799.5,249.2 790.8,271.6 784.8,283.2" fill="#333333"/><polygon points="727.7,405.2 733.7,402.9 733.3,423.3 727.3,423.3" fill="#494949"/><polygon points="727.3,423.3 733.3,423.3 733.7,443.8 727.7,441.4" fill="#494949"/><polygon points="727.7,441.4 733.7,443.8 735.0,463.0 728.8,458.5" fill="#484848"/><polygon points="728.8,388.2 735.0,383.6 733.7,402.9 727.7,405.2" fill="#484848"/><polygon points="778.8,552.2 784.8,563.4 792.7,583.8 785.8,570.6" fill="#363636"/><polygon points="785.8,276.0 792.7,262.9 784.8,283.2 778.8,294.4" fill="#353535"/><polygon points="735.0,463.0 741.1,467.9 743.4,486.9 737.1,480.0" fill="#454545"/><polygon points="737.1,366.7 743.4,359.8 741.1,378.8 735.0,383.6" fill="#454545"/><polygon points="749.6,494.2 755.7,501.8 759.8,520.9 753.3,511.3" fill="#404040"/><polygon points="753.3,335.3 759.8,325.7 755.7,344.9 749.6,352.5" fill="#404040"/><polygon points="721.2,423.3 727.3,423.3 727.7,441.4 721.5,439.2" fill="#4a4a4a"/><polygon points="721.5,407.5 727.7,405.2 727.3,423.3 721.2,423.3" fill="#4a4a4a"/><polygon points="772.6,541.4 778.8,552.2 785.8,570.6 778.9,558.0" fill="#383838"/><polygon points="778.9,288.7 785.8,276.0 778.8,294.4 772.6,305.3" fill="#383838"/><polygon points="743.4,486.9 749.6,494.2 753.3,511.3 746.6,502.2" fill="#424242"/><polygon points="746.6,344.5 753.3,335.3 749.6,352.5 743.4,359.8" fill="#424242"/><polygon points="728.8,458.5 735.0,463.0 737.1,480.0 730.6,473.4" fill="#474747"/><polygon points="730.6,373.3 737.1,366.7 735.0,383.6 728.8,388.2" fill="#474747"/><polygon points="721.5,439.2 727.7,441.4 728.8,458.5 722.4,454.1" fill="#494949"/><polygon points="722.4,392.6 728.8,388.2 727.7,405.2 721.5,407.5" fill="#494949"/><polygon points="766.3,530.9 772.6,541.4 778.9,558.0 771.9,545.8" fill="#3a3a3a"/><polygon points="771.9,300.8 778.9,288.7 772.6,305.3 766.3,315.7" fill="#3a3a3a"/><polygon points="714.8,423.3 721.2,423.3 721.5,439.2 715.1,437.1" fill="#4b4b4b"/><polygon points="715.1,409.6 721.5,407.5 721.2,423.3 714.8,423.3" fill="#4b4b4b"/><polygon points="737.1,480.0 743.4,486.9 746.6,502.2 739.8,493.5" fill="#444444"/><polygon points="739.8,353.2 746.6,344.5 743.4,359.8 737.1,366.7" fill="#434343"/><polygon points="722.4,454.1 728.8,458.5 730.6,473.4 723.9,467.1" fill="#484848"/><polygon points="723.9,379.5 730.6,373.3 728.8,388.2 722.4,392.6" fill="#484848"/><polygon points="715.1,437.1 721.5,439.2 722.4,454.1 715.9,450.0" fill="#4a4a4a"/><polygon points="715.9,396.6 722.4,392.6 721.5,407.5 715.1,409.6" fill="#4a4a4a"/><polygon points="759.8,520.9 766.3,530.9 771.9,545.8 764.8,534.2" fill="#3c3c3c"/><polygon points="764.8,312.5 771.9,300.8 766.3,315.7 759.8,325.7" fill="#3c3c3c"/><polygon points="730.6,473.4 737.1,480.0 739.8,493.5 733.0,485.2" fill="#454545"/><polygon points="733.0,361.4 739.8,353.2 737.1,366.7 730.6,373.3" fill="#454545"/><polygon points="708.5,411.5 715.1,409.6 714.8,423.3 708.3,423.3" fill="#4c4c4c"/><polygon points="708.3,423.3 714.8,423.3 715.1,437.1 708.5,435.1" fill="#4c4c4c"/><polygon points="753.3,511.3 759.8,520.9 764.8,534.2 757.6,523.1" fill="#3e3e3e"/><polygon points="757.6,323.5 764.8,312.5 759.8,325.7 753.3,335.3" fill="#3e3e3e"/><polygon points="715.9,450.0 722.4,454.1 723.9,467.1 717.2,461.3" fill="#494949"/><polygon points="717.2,385.4 723.9,379.5 722.4,392.6 715.9,396.6" fill="#494949"/><polygon points="709.2,400.5 715.9,396.6 715.1,409.6 708.5,411.5" fill="#4b4b4b"/><polygon points="708.5,435.1 715.1,437.1 715.9,450.0 709.2,446.2" fill="#4b4b4b"/><polygon points="746.6,502.2 753.3,511.3 757.6,523.1 750.4,512.6" fill="#404040"/><polygon points="750.4,334.1 757.6,323.5 753.3,335.3 746.6,344.5" fill="#404040"/><polygon points="723.9,467.1 730.6,473.4 733.0,485.2 726.0,477.5" fill="#474747"/><polygon points="726.0,369.2 733.0,361.4 730.6,373.3 723.9,379.5" fill="#474747"/><polygon points="701.8,413.4 708.5,411.5 708.3,423.3 701.6,423.3" fill="#4d4d4d"/><polygon points="701.6,423.3 708.3,423.3 708.5,435.1 701.8,433.3" fill="#4d4d4d"/><polygon points="710.3,390.8 717.2,385.4 715.9,396.6 709.2,400.5" fill="#4a4a4a"/><polygon points="709.2,446.2 715.9,450.0 717.2,461.3 710.3,455.8" fill="#4a4a4a"/><polygon points="739.8,493.5 746.6,502.2 750.4,512.6 743.1,502.6" fill="#424242"/><polygon points="743.1,344.1 750.4,334.1 746.6,344.5 739.8,353.2" fill="#424242"/><polygon points="702.4,404.0 709.2,400.5 708.5,411.5 701.8,413.4" fill="#4c4c4c"/><polygon points="701.8,433.3 708.5,435.1 709.2,446.2 702.4,442.6" fill="#4c4c4c"/><polygon points="717.2,461.3 723.9,467.1 726.0,477.5 718.9,470.2" fill="#484848"/><polygon points="718.9,376.5 726.0,369.2 723.9,379.5 717.2,385.4" fill="#484848"/><polygon points="792.7,583.8 799.5,597.5 809.4,609.4 801.6,594.4" fill="#313131"/><polygon points="801.6,252.3 809.4,237.2 799.5,249.2 792.7,262.9" fill="#303030"/><polygon points="785.8,570.6 792.7,583.8 801.6,594.4 793.8,580.0" fill="#333333"/><polygon points="793.8,266.7 801.6,252.3 792.7,262.9 785.8,276.0" fill="#333333"/><polygon points="733.0,485.2 739.8,493.5 743.1,502.6 735.8,493.2" fill="#444444"/><polygon points="735.8,353.5 743.1,344.1 739.8,353.2 733.0,361.4" fill="#444444"/><polygon points="694.9,415.0 701.8,413.4 701.6,423.3 694.8,423.3" fill="#4f4f4f"/><polygon points="694.8,423.3 701.6,423.3 701.8,433.3 694.9,431.6" fill="#4f4f4f"/><polygon points="703.2,395.9 710.3,390.8 709.2,400.5 702.4,404.0" fill="#4b4b4b"/><polygon points="702.4,442.6 709.2,446.2 710.3,455.8 703.2,450.8" fill="#4c4c4c"/><polygon points="710.3,455.8 717.2,461.3 718.9,470.2 711.7,463.4" fill="#4a4a4a"/><polygon points="711.7,383.3 718.9,376.5 717.2,385.4 710.3,390.8" fill="#4a4a4a"/><polygon points="694.9,431.6 701.8,433.3 702.4,442.6 695.4,439.4" fill="#4e4e4e"/><polygon points="695.4,407.3 702.4,404.0 701.8,413.4 694.9,415.0" fill="#4d4d4d"/><polygon points="778.9,558.0 785.8,570.6 793.8,580.0 786.0,566.2" fill="#363636"/><polygon points="786.0,280.5 793.8,266.7 785.8,276.0 778.9,288.7" fill="#363636"/><polygon points="726.0,477.5 733.0,485.2 735.8,493.2 728.3,484.3" fill="#464646"/><polygon points="728.3,362.3 735.8,353.5 733.0,361.4 726.0,369.2" fill="#464646"/><polygon points="771.9,545.8 778.9,558.0 786.0,566.2 778.2,553.0" fill="#383838"/><polygon points="778.2,293.7 786.0,280.5 778.9,288.7 771.9,300.8" fill="#383838"/><polygon points="695.4,439.4 702.4,442.6 703.2,450.8 696.1,446.1" fill="#4d4d4d"/><polygon points="696.1,400.6 703.2,395.9 702.4,404.0 695.4,407.3" fill="#4c4c4c"/><polygon points="687.8,423.3 694.8,423.3 694.9,431.6 687.9,430.1" fill="#505050"/><polygon points="687.9,416.6 694.9,415.0 694.8,423.3 687.8,423.3" fill="#505050"/><polygon points="703.2,450.8 710.3,455.8 711.7,463.4 704.4,457.1" fill="#4b4b4b"/><polygon points="704.4,389.6 711.7,383.3 710.3,390.8 703.2,395.9" fill="#4b4b4b"/><polygon points="764.8,534.2 771.9,545.8 778.2,553.0 770.3,540.4" fill="#3b3b3b"/><polygon points="770.3,306.2 778.2,293.7 771.9,300.8 764.8,312.5" fill="#3b3b3b"/><polygon points="718.9,470.2 726.0,477.5 728.3,484.3 720.9,476.0" fill="#484848"/><polygon points="720.9,370.6 728.3,362.3 726.0,369.2 718.9,376.5" fill="#484848"/><polygon points="688.3,410.3 695.4,407.3 694.9,415.0 687.9,416.6" fill="#4f4f4f"/><polygon points="687.9,430.1 694.9,431.6 695.4,439.4 688.3,436.4" fill="#4f4f4f"/><polygon points="757.6,523.1 764.8,534.2 770.3,540.4 762.5,528.5" fill="#3d3d3d"/><polygon points="762.5,318.1 770.3,306.2 764.8,312.5 757.6,323.5" fill="#3d3d3d"/><polygon points="688.3,436.4 695.4,439.4 696.1,446.1 688.8,441.8" fill="#4e4e4e"/><polygon points="688.8,404.8 696.1,400.6 695.4,407.3 688.3,410.3" fill="#4e4e4e"/><polygon points="711.7,463.4 718.9,470.2 720.9,476.0 713.3,468.3" fill="#494949"/><polygon points="713.3,378.3 720.9,370.6 718.9,376.5 711.7,383.3" fill="#494949"/><polygon points="696.1,446.1 703.2,450.8 704.4,457.1 697.0,451.3" fill="#4c4c4c"/><polygon points="697.0,395.3 704.4,389.6 703.2,395.9 696.1,400.6" fill="#4c4c4c"/><polygon points="750.4,512.6 757.6,523.1 762.5,528.5 754.6,517.2" fill="#3f3f3f"/><polygon points="754.6,329.4 762.5,318.1 757.6,323.5 750.4,334.1" fill="#3f3f3f"/><polygon points="680.7,418.0 687.9,416.6 687.8,423.3 680.6,423.3" fill="#515151"/><polygon points="680.6,423.3 687.8,423.3 687.9,430.1 680.7,428.7" fill="#525252"/><polygon points="681.0,413.0 688.3,410.3 687.9,416.6 680.7,418.0" fill="#505050"/><polygon points="680.7,428.7 687.9,430.1 688.3,436.4 681.0,433.7" fill="#515151"/><polygon points="743.1,502.6 750.4,512.6 754.6,517.2 746.7,506.6" fill="#424242"/><polygon points="746.7,340.1 754.6,329.4 750.4,334.1 743.1,344.1" fill="#414141"/><polygon points="704.4,457.1 711.7,463.4 713.3,468.3 705.7,461.2" fill="#4b4b4b"/><polygon points="705.7,385.4 713.3,378.3 711.7,383.3 704.4,389.6" fill="#4b4b4b"/><polygon points="688.8,441.8 696.1,446.1 697.0,451.3 689.5,446.1" fill="#4e4e4e"/><polygon points="689.5,400.6 697.0,395.3 696.1,400.6 688.8,404.8" fill="#4d4d4d"/><polygon points="735.8,493.2 743.1,502.6 746.7,506.6 738.9,496.6" fill="#444444"/><polygon points="738.9,350.1 746.7,340.1 743.1,344.1 735.8,353.5" fill="#434343"/><polygon points="681.4,408.7 688.8,404.8 688.3,410.3 681.0,413.0" fill="#4f4f4f"/><polygon points="681.0,433.7 688.3,436.4 688.8,441.8 681.4,438.0" fill="#4f4f4f"/><polygon points="673.4,419.2 680.7,418.0 680.6,423.3 673.4,423.3" fill="#525252"/><polygon points="673.4,423.3 680.6,423.3 680.7,428.7 673.4,427.4" fill="#525252"/><polygon points="728.3,484.3 735.8,493.2 738.9,496.6 731.0,487.2" fill="#464646"/><polygon points="731.0,359.5 738.9,350.1 735.8,353.5 728.3,362.3" fill="#464646"/><polygon points="697.0,451.3 704.4,457.1 705.7,461.2 698.1,454.7" fill="#4c4c4c"/><polygon points="698.1,391.9 705.7,385.4 704.4,389.6 697.0,395.3" fill="#4c4c4c"/><polygon points="673.4,427.4 680.7,428.7 681.0,433.7 673.6,431.3" fill="#515151"/><polygon points="673.6,415.4 681.0,413.0 680.7,418.0 673.4,419.2" fill="#515151"/><polygon points="681.4,438.0 688.8,441.8 689.5,446.1 682.0,441.3" fill="#4e4e4e"/><polygon points="682.0,405.3 689.5,400.6 688.8,404.8 681.4,408.7" fill="#4e4e4e"/><polygon points="720.9,476.0 728.3,484.3 731.0,487.2 723.0,478.4" fill="#484848"/><polygon points="723.0,368.2 731.0,359.5 728.3,362.3 720.9,370.6" fill="#474747"/><polygon points="673.6,431.3 681.0,433.7 681.4,438.0 673.9,434.6" fill="#505050"/><polygon points="673.9,412.1 681.4,408.7 681.0,413.0 673.6,415.4" fill="#505050"/><polygon points="689.5,446.1 697.0,451.3 698.1,454.7 690.4,448.8" fill="#4e4e4e"/><polygon points="690.4,397.9 698.1,391.9 697.0,395.3 689.5,400.6" fill="#4d4d4d"/><polygon points="713.3,468.3 720.9,476.0 723.0,478.4 715.1,470.3" fill="#494949"/><polygon points="715.1,376.3 723.0,368.2 720.9,370.6 713.3,378.3" fill="#494949"/><polygon points="666.0,420.3 673.4,419.2 673.4,423.3 665.9,423.3" fill="#515151"/><polygon points="665.9,423.3 673.4,423.3 673.4,427.4 666.0,426.4" fill="#515151"/><polygon points="666.0,426.4 673.4,427.4 673.6,431.3 666.1,429.2" fill="#515151"/><polygon points="666.1,417.5 673.6,415.4 673.4,419.2 666.0,420.3" fill="#515151"/><polygon points="673.9,434.6 681.4,438.0 682.0,441.3 674.3,437.2" fill="#4f4f4f"/><polygon points="674.3,409.5 682.0,405.3 681.4,408.7 673.9,412.1" fill="#4f4f4f"/><polygon points="705.7,461.2 713.3,468.3 715.1,470.3 707.2,462.8" fill="#4b4b4b"/><polygon points="707.2,383.8 715.1,376.3 713.3,378.3 705.7,385.4" fill="#4b4b4b"/><polygon points="682.0,441.3 689.5,446.1 690.4,448.8 682.6,443.5" fill="#4f4f4f"/><polygon points="682.6,403.2 690.4,397.9 689.5,400.6 682.0,405.3" fill="#4e4e4e"/><polygon points="666.1,429.2 673.6,431.3 673.9,434.6 666.3,431.6" fill="#505050"/><polygon points="666.3,415.0 673.9,412.1 673.6,415.4 666.1,417.5" fill="#505050"/><polygon points="698.1,454.7 705.7,461.2 707.2,462.8 699.2,456.0" fill="#4d4d4d"/><polygon points="699.2,390.7 707.2,383.8 705.7,385.4 698.1,391.9" fill="#4d4d4d"/><polygon points="658.4,423.3 665.9,423.3 666.0,426.4 658.4,425.4" fill="#515151"/><polygon points="658.4,421.2 666.0,420.3 665.9,423.3 658.4,423.3" fill="#515151"/><polygon points="666.3,431.6 673.9,434.6 674.3,437.2 666.6,433.5" fill="#4f4f4f"/><polygon points="666.6,413.1 674.3,409.5 673.9,412.1 666.3,415.0" fill="#4f4f4f"/><polygon points="674.3,437.2 682.0,441.3 682.6,443.5 674.8,438.8" fill="#4f4f4f"/><polygon points="674.8,407.9 682.6,403.2 682.0,405.3 674.3,409.5" fill="#4f4f4f"/><polygon points="658.4,425.4 666.0,426.4 666.1,429.2 658.5,427.4" fill="#505050"/><polygon points="658.5,419.2 666.1,417.5 666.0,420.3 658.4,421.2" fill="#505050"/><polygon points="690.4,448.8 698.1,454.7 699.2,456.0 691.3,449.8" fill="#4e4e4e"/><polygon points="691.3,396.8 699.2,390.7 698.1,391.9 690.4,397.9" fill="#4e4e4e"/><polygon points="658.5,427.4 666.1,429.2 666.3,431.6 658.6,429.1" fill="#505050"/><polygon points="658.6,417.6 666.3,415.0 666.1,417.5 658.5,419.2" fill="#4f4f4f"/><polygon points="682.6,443.5 690.4,448.8 691.3,449.8 683.3,444.3" fill="#4f4f4f"/><polygon points="683.3,402.4 691.3,396.8 690.4,397.9 682.6,403.2" fill="#4f4f4f"/><polygon points="666.6,433.5 674.3,437.2 674.8,438.8 666.9,434.7" fill="#4f4f4f"/><polygon points="666.9,412.0 674.8,407.9 674.3,409.5 666.6,413.1" fill="#4f4f4f"/><polygon points="658.6,429.1 666.3,431.6 666.6,433.5 658.8,430.4" fill="#4f4f4f"/><polygon points="658.8,416.2 666.6,413.1 666.3,415.0 658.6,417.6" fill="#4f4f4f"/><polygon points="650.7,422.0 658.4,421.2 658.4,423.3 650.7,423.3" fill="#505050"/><polygon points="650.7,423.3 658.4,423.3 658.4,425.4 650.7,424.7" fill="#505050"/><polygon points="650.7,424.7 658.4,425.4 658.5,427.4 650.8,426.0" fill="#4f4f4f"/><polygon points="650.8,420.7 658.5,419.2 658.4,421.2 650.7,422.0" fill="#4f4f4f"/><polygon points="674.8,438.8 682.6,443.5 683.3,444.3 675.3,439.4" fill="#505050"/><polygon points="675.3,407.3 683.3,402.4 682.6,403.2 674.8,407.9" fill="#505050"/><polygon points="650.8,426.0 658.5,427.4 658.6,429.1 650.9,427.0" fill="#4f4f4f"/><polygon points="650.9,419.6 658.6,417.6 658.5,419.2 650.8,420.7" fill="#4f4f4f"/><polygon points="658.8,430.4 666.6,433.5 666.9,434.7 659.0,431.2" fill="#4e4e4e"/><polygon points="659.0,415.4 666.9,412.0 666.6,413.1 658.8,416.2" fill="#4e4e4e"/><polygon points="666.9,434.7 674.8,438.8 675.3,439.4 667.3,435.1" fill="#505050"/><polygon points="667.3,411.5 675.3,407.3 674.8,407.9 666.9,412.0" fill="#505050"/><polygon points="650.9,427.0 658.6,429.1 658.8,430.4 651.0,427.9" fill="#4e4e4e"/><polygon points="651.0,418.8 658.8,416.2 658.6,417.6 650.9,419.6" fill="#4e4e4e"/><polygon points="731.0,487.2 738.9,496.6 742.0,495.0 733.6,485.7" fill="#464646"/><polygon points="733.6,361.0 742.0,351.7 738.9,350.1 731.0,359.5" fill="#464646"/><polygon points="723.0,478.4 731.0,487.2 733.6,485.7 725.3,477.1" fill="#484848"/><polygon points="725.3,369.6 733.6,361.0 731.0,359.5 723.0,368.2" fill="#484848"/><polygon points="738.9,496.6 746.7,506.6 750.5,504.9 742.0,495.0" fill="#444444"/><polygon points="742.0,351.7 750.5,341.7 746.7,340.1 738.9,350.1" fill="#444444"/><polygon points="715.1,470.3 723.0,478.4 725.3,477.1 717.0,469.1" fill="#4a4a4a"/><polygon points="717.0,377.6 725.3,369.6 723.0,368.2 715.1,376.3" fill="#4a4a4a"/><polygon points="746.7,506.6 754.6,517.2 759.0,515.5 750.5,504.9" fill="#424242"/><polygon points="750.5,341.7 759.0,331.1 754.6,329.4 746.7,340.1" fill="#424242"/><polygon points="707.2,462.8 715.1,470.3 717.0,469.1 708.7,461.8" fill="#4c4c4c"/><polygon points="708.7,384.9 717.0,377.6 715.1,376.3 707.2,383.8" fill="#4c4c4c"/><polygon points="754.6,517.2 762.5,528.5 767.5,526.8 759.0,515.5" fill="#3f3f3f"/><polygon points="759.0,331.1 767.5,319.8 762.5,318.1 754.6,329.4" fill="#3f3f3f"/><polygon points="642.9,422.6 650.7,422.0 650.7,423.3 642.9,423.3" fill="#4f4f4f"/><polygon points="642.9,423.3 650.7,423.3 650.7,424.7 642.9,424.1" fill="#4f4f4f"/><polygon points="699.2,456.0 707.2,462.8 708.7,461.8 700.4,455.1" fill="#4d4d4d"/><polygon points="700.4,391.6 708.7,384.9 707.2,383.8 699.2,390.7" fill="#4d4d4d"/><polygon points="651.0,427.9 658.8,430.4 659.0,431.2 651.1,428.4" fill="#4d4d4d"/><polygon points="651.1,418.3 659.0,415.4 658.8,416.2 651.0,418.8" fill="#4d4d4d"/><polygon points="643.0,421.9 650.8,420.7 650.7,422.0 642.9,422.6" fill="#4e4e4e"/><polygon points="642.9,424.1 650.7,424.7 650.8,426.0 643.0,424.8" fill="#4e4e4e"/><polygon points="659.0,431.2 666.9,434.7 667.3,435.1 659.3,431.5" fill="#4f4f4f"/><polygon points="659.3,415.1 667.3,411.5 666.9,412.0 659.0,415.4" fill="#4f4f4f"/><polygon points="762.5,528.5 770.3,540.4 776.1,538.8 767.5,526.8" fill="#3d3d3d"/><polygon points="767.5,319.8 776.1,307.9 770.3,306.2 762.5,318.1" fill="#3d3d3d"/><polygon points="691.3,449.8 699.2,456.0 700.4,455.1 692.2,449.0" fill="#4f4f4f"/><polygon points="692.2,397.6 700.4,391.6 699.2,390.7 691.3,396.8" fill="#4f4f4f"/><polygon points="770.3,540.4 778.2,553.0 784.7,551.5 776.1,538.8" fill="#3a3a3a"/><polygon points="776.1,307.9 784.7,295.2 778.2,293.7 770.3,306.2" fill="#3a3a3a"/><polygon points="643.0,421.2 650.9,419.6 650.8,420.7 643.0,421.9" fill="#4e4e4e"/><polygon points="643.0,424.8 650.8,426.0 650.9,427.0 643.0,425.4" fill="#4e4e4e"/><polygon points="683.3,444.3 691.3,449.8 692.2,449.0 684.0,443.6" fill="#505050"/><polygon points="684.0,403.0 692.2,397.6 691.3,396.8 683.3,402.4" fill="#505050"/><polygon points="778.2,553.0 786.0,566.2 793.4,564.8 784.7,551.5" fill="#383838"/><polygon points="784.7,295.2 793.4,281.9 786.0,280.5 778.2,293.7" fill="#383838"/><polygon points="643.0,425.4 650.9,427.0 651.0,427.9 643.1,425.9" fill="#4d4d4d"/><polygon points="643.1,420.8 651.0,418.8 650.9,419.6 643.0,421.2" fill="#4d4d4d"/><polygon points="675.3,439.4 683.3,444.3 684.0,443.6 675.8,438.9" fill="#515151"/><polygon points="675.8,407.8 684.0,403.0 683.3,402.4 675.3,407.3" fill="#515151"/><polygon points="786.0,566.2 793.8,580.0 802.2,578.9 793.4,564.8" fill="#353535"/><polygon points="793.4,281.9 802.2,267.8 793.8,266.7 786.0,280.5" fill="#353535"/><polygon points="651.1,428.4 659.0,431.2 659.3,431.5 651.3,428.6" fill="#4e4e4e"/><polygon points="651.3,418.1 659.3,415.1 659.0,415.4 651.1,418.3" fill="#4e4e4e"/><polygon points="667.3,435.1 675.3,439.4 675.8,438.9 667.7,434.8" fill="#515151"/><polygon points="667.7,411.9 675.8,407.8 675.3,407.3 667.3,411.5" fill="#515151"/><polygon points="793.8,580.0 801.6,594.4 811.1,593.6 802.2,578.9" fill="#323232"/><polygon points="802.2,267.8 811.1,253.0 801.6,252.3 793.8,266.7" fill="#323232"/><polygon points="643.1,425.9 651.0,427.9 651.1,428.4 643.1,426.2" fill="#4c4c4c"/><polygon points="643.1,420.5 651.1,418.3 651.0,418.8 643.1,420.8" fill="#4c4c4c"/><polygon points="659.3,431.5 667.3,435.1 667.7,434.8 659.5,431.3" fill="#515151"/><polygon points="659.5,415.4 667.7,411.9 667.3,411.5 659.3,415.1" fill="#505050"/><polygon points="801.6,594.4 809.4,609.4 820.0,609.1 811.1,593.6" fill="#303030"/><polygon points="811.1,253.0 820.0,237.6 809.4,237.2 801.6,252.3" fill="#303030"/><polygon points="635.0,423.0 642.9,422.6 642.9,423.3 635.0,423.3" fill="#4e4e4e"/><polygon points="635.0,423.3 642.9,423.3 642.9,424.1 635.0,423.7" fill="#4e4e4e"/><polygon points="635.0,422.7 643.0,421.9 642.9,422.6 635.0,423.0" fill="#4d4d4d"/><polygon points="635.0,423.7 642.9,424.1 643.0,424.8 635.0,424.0" fill="#4d4d4d"/><polygon points="643.1,426.2 651.1,428.4 651.3,428.6 643.2,426.3" fill="#4c4c4c"/><polygon points="643.2,420.4 651.3,418.1 651.1,418.3 643.1,420.5" fill="#4c4c4c"/><polygon points="635.0,424.0 643.0,424.8 643.0,425.4 635.1,424.3" fill="#4d4d4d"/><polygon points="635.1,422.4 643.0,421.2 643.0,421.9 635.0,422.7" fill="#4d4d4d"/><polygon points="651.3,428.6 659.3,431.5 659.5,431.3 651.4,428.4" fill="#4f4f4f"/><polygon points="651.4,418.3 659.5,415.4 659.3,415.1 651.3,418.1" fill="#4f4f4f"/><polygon points="635.1,424.3 643.0,425.4 643.1,425.9 635.1,424.5" fill="#4c4c4c"/><polygon points="635.1,422.2 643.1,420.8 643.0,421.2 635.1,422.4" fill="#4c4c4c"/><polygon points="635.1,424.5 643.1,425.9 643.1,426.2 635.1,424.6" fill="#4b4b4b"/><polygon points="635.1,422.1 643.1,420.5 643.1,420.8 635.1,422.2" fill="#4b4b4b"/><polygon points="643.2,426.3 651.3,428.6 651.4,428.4 643.3,426.2" fill="#4d4d4d"/><polygon points="643.3,420.5 651.4,418.3 651.3,418.1 643.2,420.4" fill="#4d4d4d"/><polygon points="635.2,422.0 643.2,420.4 643.1,420.5 635.1,422.1" fill="#4b4b4b"/><polygon points="635.1,424.6 643.1,426.2 643.2,426.3 635.2,424.6" fill="#4b4b4b"/><polygon points="651.4,428.4 659.5,431.3 659.7,430.5 651.5,427.9" fill="#505050"/><polygon points="651.5,418.8 659.7,416.2 659.5,415.4 651.4,418.3" fill="#505050"/><polygon points="659.5,431.3 667.7,434.8 668.0,433.6 659.7,430.5" fill="#525252"/><polygon points="659.7,416.2 668.0,413.1 667.7,411.9 659.5,415.4" fill="#525252"/><polygon points="635.2,424.6 643.2,426.3 643.3,426.2 635.2,424.6" fill="#4c4c4c"/><polygon points="635.2,422.1 643.3,420.5 643.2,420.4 635.2,422.0" fill="#4c4c4c"/><polygon points="643.3,426.2 651.4,428.4 651.5,427.9 643.4,425.9" fill="#4f4f4f"/><polygon points="643.4,420.8 651.5,418.8 651.4,418.3 643.3,420.5" fill="#4f4f4f"/><polygon points="627.1,423.2 635.0,423.0 635.0,423.3 627.1,423.3" fill="#4d4d4d"/><polygon points="627.1,423.3 635.0,423.3 635.0,423.7 627.1,423.4" fill="#4d4d4d"/><polygon points="667.7,434.8 675.8,438.9 676.3,437.3 668.0,433.6" fill="#535353"/><polygon points="668.0,413.1 676.3,409.4 675.8,407.8 667.7,411.9" fill="#525252"/><polygon points="627.1,423.2 635.0,422.7 635.0,423.0 627.1,423.2" fill="#4c4c4c"/><polygon points="627.1,423.4 635.0,423.7 635.0,424.0 627.1,423.5" fill="#4c4c4c"/><polygon points="627.1,423.1 635.1,422.4 635.0,422.7 627.1,423.2" fill="#4c4c4c"/><polygon points="627.1,423.5 635.0,424.0 635.1,424.3 627.1,423.6" fill="#4c4c4c"/><polygon points="627.1,423.0 635.1,422.2 635.1,422.4 627.1,423.1" fill="#4b4b4b"/><polygon points="627.1,423.6 635.1,424.3 635.1,424.5 627.1,423.6" fill="#4b4b4b"/><polygon points="635.2,424.6 643.3,426.2 643.4,425.9 635.2,424.5" fill="#4d4d4d"/><polygon points="635.2,422.2 643.4,420.8 643.3,420.5 635.2,422.1" fill="#4d4d4d"/><polygon points="627.1,423.0 635.1,422.1 635.1,422.2 627.1,423.0" fill="#4a4a4a"/><polygon points="627.1,423.6 635.1,424.5 635.1,424.6 627.1,423.6" fill="#4a4a4a"/><polygon points="675.8,438.9 684.0,443.6 684.6,441.6 676.3,437.3" fill="#525252"/><polygon points="676.3,409.4 684.6,405.1 684.0,403.0 675.8,407.8" fill="#525252"/><polygon points="627.1,423.6 635.1,424.6 635.2,424.6 627.1,423.7" fill="#494949"/><polygon points="627.1,423.0 635.2,422.0 635.1,422.1 627.1,423.0" fill="#494949"/><polygon points="643.4,425.9 651.5,427.9 651.6,427.1 643.4,425.4" fill="#505050"/><polygon points="643.4,421.2 651.6,419.6 651.5,418.8 643.4,420.8" fill="#505050"/><polygon points="635.2,424.5 643.4,425.9 643.4,425.4 635.2,424.3" fill="#4e4e4e"/><polygon points="635.2,422.4 643.4,421.2 643.4,420.8 635.2,422.2" fill="#4e4e4e"/><polygon points="627.1,423.7 635.2,424.6 635.2,424.6 627.1,423.6" fill="#4a4a4a"/><polygon points="627.1,423.0 635.2,422.1 635.2,422.0 627.1,423.0" fill="#4a4a4a"/><polygon points="627.1,423.6 635.2,424.6 635.2,424.5 627.1,423.6" fill="#4b4b4b"/><polygon points="627.1,423.0 635.2,422.2 635.2,422.1 627.1,423.0" fill="#4b4b4b"/><polygon points="651.5,427.9 659.7,430.5 659.9,429.2 651.6,427.1" fill="#515151"/><polygon points="651.6,419.6 659.9,417.5 659.7,416.2 651.5,418.8" fill="#515151"/><polygon points="635.2,424.3 643.4,425.4 643.5,424.8 635.3,424.0" fill="#4f4f4f"/><polygon points="635.3,422.7 643.5,421.8 643.4,421.2 635.2,422.4" fill="#4f4f4f"/><polygon points="627.1,423.6 635.2,424.5 635.2,424.3 627.1,423.6" fill="#4c4c4c"/><polygon points="627.1,423.1 635.2,422.4 635.2,422.2 627.1,423.0" fill="#4c4c4c"/><polygon points="684.0,443.6 692.2,449.0 693.0,446.5 684.6,441.6" fill="#515151"/><polygon points="684.6,405.1 693.0,400.2 692.2,397.6 684.0,403.0" fill="#515151"/><polygon points="627.1,423.6 635.2,424.3 635.3,424.0 627.1,423.5" fill="#4d4d4d"/><polygon points="627.1,423.2 635.3,422.7 635.2,422.4 627.1,423.1" fill="#4d4d4d"/><polygon points="635.3,424.0 643.5,424.8 643.5,424.1 635.3,423.7" fill="#4f4f4f"/><polygon points="635.3,423.0 643.5,422.6 643.5,421.8 635.3,422.7" fill="#4f4f4f"/><polygon points="627.1,423.5 635.3,424.0 635.3,423.7 627.1,423.4" fill="#4e4e4e"/><polygon points="627.1,423.2 635.3,423.0 635.3,422.7 627.1,423.2" fill="#4e4e4e"/><polygon points="643.4,425.4 651.6,427.1 651.7,426.0 643.5,424.8" fill="#515151"/><polygon points="643.5,421.8 651.7,420.7 651.6,419.6 643.4,421.2" fill="#515151"/><polygon points="627.1,423.4 635.3,423.7 635.3,423.3 627.1,423.3" fill="#4e4e4e"/><polygon points="627.1,423.3 635.3,423.3 635.3,423.0 627.1,423.2" fill="#4e4e4e"/><polygon points="635.3,423.7 643.5,424.1 643.5,423.3 635.3,423.3" fill="#505050"/><polygon points="635.3,423.3 643.5,423.3 643.5,422.6 635.3,423.0" fill="#505050"/><polygon points="619.0,423.3 627.1,423.2 627.1,423.3 619.0,423.3" fill="#4c4c4c"/><polygon points="619.0,423.3 627.1,423.3 627.1,423.4 619.0,423.3" fill="#4c4c4c"/><polygon points="619.0,423.3 627.1,423.2 627.1,423.2 619.0,423.3" fill="#4c4c4c"/><polygon points="619.0,423.3 627.1,423.4 627.1,423.5 619.0,423.3" fill="#4c4c4c"/><polygon points="619.0,423.3 627.1,423.1 627.1,423.2 619.0,423.3" fill="#4b4b4b"/><polygon points="619.0,423.3 627.1,423.5 627.1,423.6 619.0,423.3" fill="#4b4b4b"/><polygon points="619.0,423.3 627.1,423.0 627.1,423.1 619.0,423.3" fill="#4a4a4a"/><polygon points="619.0,423.3 627.1,423.6 627.1,423.6 619.0,423.3" fill="#4a4a4a"/><polygon points="619.0,423.3 627.1,423.0 627.1,423.0 619.0,423.3" fill="#494949"/><polygon points="619.0,423.3 627.1,423.6 627.1,423.6 619.0,423.3" fill="#494949"/><polygon points="659.7,430.5 668.0,433.6 668.3,431.7 659.9,429.2" fill="#535353"/><polygon points="659.9,417.5 668.3,414.9 668.0,413.1 659.7,416.2" fill="#535353"/><polygon points="619.0,423.3 627.1,423.0 627.1,423.0 619.0,423.3" fill="#484848"/><polygon points="619.0,423.3 627.1,423.6 627.1,423.7 619.0,423.3" fill="#484848"/><polygon points="619.0,423.3 627.1,423.7 627.1,423.6 619.0,423.3" fill="#484848"/><polygon points="619.0,423.3 627.1,423.0 627.1,423.0 619.0,423.3" fill="#484848"/><polygon points="619.0,423.3 627.1,423.6 627.1,423.6 619.0,423.3" fill="#494949"/><polygon points="619.0,423.3 627.1,423.0 627.1,423.0 619.0,423.3" fill="#494949"/><polygon points="619.0,423.3 627.1,423.6 627.1,423.6 619.0,423.3" fill="#4a4a4a"/><polygon points="619.0,423.3 627.1,423.1 627.1,423.0 619.0,423.3" fill="#4a4a4a"/><polygon points="643.5,424.8 651.7,426.0 651.8,424.7 643.5,424.1" fill="#515151"/><polygon points="643.5,422.6 651.8,422.0 651.7,420.7 643.5,421.8" fill="#515151"/><polygon points="619.0,423.3 627.1,423.6 627.1,423.5 619.0,423.3" fill="#4b4b4b"/><polygon points="619.0,423.3 627.1,423.2 627.1,423.1 619.0,423.3" fill="#4b4b4b"/><polygon points="619.0,423.3 627.1,423.5 627.1,423.4 619.0,423.3" fill="#4c4c4c"/><polygon points="619.0,423.3 627.1,423.2 627.1,423.2 619.0,423.3" fill="#4c4c4c"/><polygon points="619.0,423.3 627.1,423.4 627.1,423.3 619.0,423.3" fill="#4c4c4c"/><polygon points="619.0,423.3 627.1,423.3 627.1,423.2 619.0,423.3" fill="#4c4c4c"/><polygon points="692.2,449.0 700.4,455.1 701.5,451.9 693.0,446.5" fill="#505050"/><polygon points="693.0,400.2 701.5,394.7 700.4,391.6 692.2,397.6" fill="#505050"/><polygon points="643.5,424.1 651.8,424.7 651.8,423.3 643.5,423.3" fill="#515151"/><polygon points="643.5,423.3 651.8,423.3 651.8,422.0 643.5,422.6" fill="#515151"/><polygon points="651.6,427.1 659.9,429.2 660.1,427.5 651.7,426.0" fill="#525252"/><polygon points="651.7,420.7 660.1,419.2 659.9,417.5 651.6,419.6" fill="#525252"/><polygon points="668.0,433.6 676.3,437.3 676.7,434.8 668.3,431.7" fill="#545454"/><polygon points="668.3,414.9 676.7,411.9 676.3,409.4 668.0,413.1" fill="#545454"/><polygon points="651.7,426.0 660.1,427.5 660.2,425.5 651.8,424.7" fill="#535353"/><polygon points="651.8,422.0 660.2,421.2 660.1,419.2 651.7,420.7" fill="#535353"/><polygon points="700.4,455.1 708.7,461.8 710.1,458.0 701.5,451.9" fill="#4f4f4f"/><polygon points="701.5,394.7 710.1,388.7 708.7,384.9 700.4,391.6" fill="#4e4e4e"/><polygon points="651.8,424.7 660.2,425.5 660.2,423.3 651.8,423.3" fill="#535353"/><polygon points="651.8,423.3 660.2,423.3 660.2,421.2 651.8,422.0" fill="#535353"/><polygon points="659.9,429.2 668.3,431.7 668.5,429.3 660.1,427.5" fill="#545454"/><polygon points="660.1,419.2 668.5,417.4 668.3,414.9 659.9,417.5" fill="#545454"/><polygon points="676.3,437.3 684.6,441.6 685.2,438.3 676.7,434.8" fill="#545454"/><polygon points="676.7,411.9 685.2,408.4 684.6,405.1 676.3,409.4" fill="#545454"/><polygon points="660.1,427.5 668.5,429.3 668.6,426.4 660.2,425.5" fill="#545454"/><polygon points="660.2,421.2 668.6,420.3 668.5,417.4 660.1,419.2" fill="#545454"/><polygon points="708.7,461.8 717.0,469.1 718.7,464.7 710.1,458.0" fill="#4d4d4d"/><polygon points="710.1,388.7 718.7,382.0 717.0,377.6 708.7,384.9" fill="#4d4d4d"/><polygon points="668.3,431.7 676.7,434.8 677.0,431.4 668.5,429.3" fill="#555555"/><polygon points="668.5,417.4 677.0,415.2 676.7,411.9 668.3,414.9" fill="#555555"/><polygon points="660.2,425.5 668.6,426.4 668.7,423.3 660.2,423.3" fill="#555555"/><polygon points="660.2,423.3 668.7,423.3 668.6,420.3 660.2,421.2" fill="#555555"/><polygon points="684.6,441.6 693.0,446.5 693.8,442.3 685.2,438.3" fill="#535353"/><polygon points="685.2,408.4 693.8,404.4 693.0,400.2 684.6,405.1" fill="#535353"/><polygon points="717.0,469.1 725.3,477.1 727.4,471.9 718.7,464.7" fill="#4b4b4b"/><polygon points="718.7,382.0 727.4,374.7 725.3,369.6 717.0,377.6" fill="#4b4b4b"/><polygon points="668.5,429.3 677.0,431.4 677.2,427.5 668.6,426.4" fill="#565656"/><polygon points="668.6,420.3 677.2,419.1 677.0,415.2 668.5,417.4" fill="#565656"/><polygon points="676.7,434.8 685.2,438.3 685.6,433.9 677.0,431.4" fill="#555555"/><polygon points="677.0,415.2 685.6,412.7 685.2,408.4 676.7,411.9" fill="#555555"/><polygon points="668.6,426.4 677.2,427.5 677.3,423.3 668.7,423.3" fill="#565656"/><polygon points="668.7,423.3 677.3,423.3 677.2,419.1 668.6,420.3" fill="#565656"/><polygon points="725.3,477.1 733.6,485.7 736.2,479.8 727.4,471.9" fill="#494949"/><polygon points="727.4,374.7 736.2,366.8 733.6,361.0 725.3,369.6" fill="#494949"/><polygon points="693.0,446.5 701.5,451.9 702.5,446.8 693.8,442.3" fill="#515151"/><polygon points="693.8,404.4 702.5,399.9 701.5,394.7 693.0,400.2" fill="#515151"/><polygon points="677.0,431.4 685.6,433.9 685.9,428.8 677.2,427.5" fill="#565656"/><polygon points="677.2,419.1 685.9,417.8 685.6,412.7 677.0,415.2" fill="#565656"/><polygon points="685.2,438.3 693.8,442.3 694.4,436.8 685.6,433.9" fill="#545454"/><polygon points="685.6,412.7 694.4,409.9 693.8,404.4 685.2,408.4" fill="#545454"/><polygon points="733.6,485.7 742.0,495.0 745.1,488.3 736.2,479.8" fill="#474747"/><polygon points="736.2,366.8 745.1,358.3 742.0,351.7 733.6,361.0" fill="#474747"/><polygon points="677.2,427.5 685.9,428.8 686.0,423.3 677.3,423.3" fill="#575757"/><polygon points="677.3,423.3 686.0,423.3 685.9,417.8 677.2,419.1" fill="#575757"/><polygon points="701.5,451.9 710.1,458.0 711.3,451.8 702.5,446.8" fill="#505050"/><polygon points="702.5,399.9 711.3,394.9 710.1,388.7 701.5,394.7" fill="#505050"/><polygon points="742.0,495.0 750.5,504.9 754.0,497.5 745.1,488.3" fill="#454545"/><polygon points="745.1,358.3 754.0,349.2 750.5,341.7 742.0,351.7" fill="#454545"/><polygon points="685.6,433.9 694.4,436.8 694.7,430.3 685.9,428.8" fill="#555555"/><polygon points="685.9,417.8 694.7,416.4 694.4,409.9 685.6,412.7" fill="#555555"/><polygon points="693.8,442.3 702.5,446.8 703.2,440.0 694.4,436.8" fill="#535353"/><polygon points="694.4,409.9 703.2,406.7 702.5,399.9 693.8,404.4" fill="#535353"/><polygon points="710.1,458.0 718.7,464.7 720.2,457.3 711.3,451.8" fill="#4e4e4e"/><polygon points="711.3,394.9 720.2,389.4 718.7,382.0 710.1,388.7" fill="#4e4e4e"/><polygon points="685.9,428.8 694.7,430.3 694.9,423.3 686.0,423.3" fill="#565656"/><polygon points="686.0,423.3 694.9,423.3 694.7,416.4 685.9,417.8" fill="#565656"/><polygon points="750.5,504.9 759.0,515.5 763.1,507.3 754.0,497.5" fill="#434343"/><polygon points="754.0,349.2 763.1,339.4 759.0,331.1 750.5,341.7" fill="#424242"/><polygon points="694.4,436.8 703.2,440.0 703.7,432.0 694.7,430.3" fill="#545454"/><polygon points="694.7,416.4 703.7,414.7 703.2,406.7 694.4,409.9" fill="#545454"/><polygon points="702.5,446.8 711.3,451.8 712.2,443.6 703.2,440.0" fill="#515151"/><polygon points="703.2,406.7 712.2,403.1 711.3,394.9 702.5,399.9" fill="#515151"/><polygon points="718.7,464.7 727.4,471.9 729.2,463.3 720.2,457.3" fill="#4c4c4c"/><polygon points="720.2,389.4 729.2,383.3 727.4,374.7 718.7,382.0" fill="#4c4c4c"/><polygon points="759.0,515.5 767.5,526.8 772.4,517.8 763.1,507.3" fill="#404040"/><polygon points="763.1,339.4 772.4,328.9 767.5,319.8 759.0,331.1" fill="#404040"/><polygon points="694.7,430.3 703.7,432.0 703.9,423.3 694.9,423.3" fill="#545454"/><polygon points="694.9,423.3 703.9,423.3 703.7,414.7 694.7,416.4" fill="#545454"/><polygon points="727.4,471.9 736.2,479.8 738.4,469.9 729.2,463.3" fill="#4a4a4a"/><polygon points="729.2,383.3 738.4,376.8 736.2,366.8 727.4,374.7" fill="#4a4a4a"/><polygon points="767.5,526.8 776.1,538.8 781.7,528.9 772.4,517.8" fill="#3e3e3e"/><polygon points="772.4,328.9 781.7,317.8 776.1,307.9 767.5,319.8" fill="#3e3e3e"/><polygon points="711.3,451.8 720.2,457.3 721.4,447.5 712.2,443.6" fill="#4f4f4f"/><polygon points="712.2,403.1 721.4,399.2 720.2,389.4 711.3,394.9" fill="#4f4f4f"/><polygon points="703.2,440.0 712.2,443.6 712.8,433.8 703.7,432.0" fill="#525252"/><polygon points="703.7,414.7 712.8,412.8 712.2,403.1 703.2,406.7" fill="#525252"/><polygon points="703.7,432.0 712.8,433.8 713.0,423.3 703.9,423.3" fill="#535353"/><polygon points="703.9,423.3 713.0,423.3 712.8,412.8 703.7,414.7" fill="#535353"/><polygon points="776.1,538.8 784.7,551.5 791.1,540.7 781.7,528.9" fill="#3b3b3b"/><polygon points="781.7,317.8 791.1,305.9 784.7,295.2 776.1,307.9" fill="#3b3b3b"/><polygon points="736.2,479.8 745.1,488.3 747.7,477.0 738.4,469.9" fill="#484848"/><polygon points="738.4,376.8 747.7,369.7 745.1,358.3 736.2,366.8" fill="#484848"/><polygon points="720.2,457.3 729.2,463.3 730.7,451.8 721.4,447.5" fill="#4e4e4e"/><polygon points="721.4,399.2 730.7,394.9 729.2,383.3 720.2,389.4" fill="#4e4e4e"/><polygon points="712.2,443.6 721.4,447.5 722.1,435.9 712.8,433.8" fill="#515151"/><polygon points="712.8,412.8 722.1,410.8 721.4,399.2 712.2,403.1" fill="#515151"/><polygon points="784.7,551.5 793.4,564.8 800.8,553.3 791.1,540.7" fill="#383838"/><polygon points="791.1,305.9 800.8,293.4 793.4,281.9 784.7,295.2" fill="#383838"/><polygon points="712.8,433.8 722.1,435.9 722.4,423.3 713.0,423.3" fill="#515151"/><polygon points="713.0,423.3 722.4,423.3 722.1,410.8 712.8,412.8" fill="#515151"/><polygon points="745.1,488.3 754.0,497.5 757.2,484.6 747.7,477.0" fill="#464646"/><polygon points="747.7,369.7 757.2,362.0 754.0,349.2 745.1,358.3" fill="#464646"/><polygon points="729.2,463.3 738.4,469.9 740.1,456.5 730.7,451.8" fill="#4c4c4c"/><polygon points="730.7,394.9 740.1,390.2 738.4,376.8 729.2,383.3" fill="#4c4c4c"/><polygon points="793.4,564.8 802.2,578.9 810.5,566.5 800.8,553.3" fill="#363636"/><polygon points="800.8,293.4 810.5,280.2 802.2,267.8 793.4,281.9" fill="#363636"/><polygon points="721.4,447.5 730.7,451.8 731.6,438.1 722.1,435.9" fill="#4f4f4f"/><polygon points="722.1,410.8 731.6,408.5 730.7,394.9 721.4,399.2" fill="#4f4f4f"/><polygon points="754.0,497.5 763.1,507.3 766.8,492.8 757.2,484.6" fill="#444444"/><polygon points="757.2,362.0 766.8,353.8 763.1,339.4 754.0,349.2" fill="#444444"/><polygon points="722.1,435.9 731.6,438.1 731.9,423.3 722.4,423.3" fill="#505050"/><polygon points="722.4,423.3 731.9,423.3 731.6,408.5 722.1,410.8" fill="#505050"/><polygon points="802.2,578.9 811.1,593.6 820.4,580.5 810.5,566.5" fill="#333333"/><polygon points="810.5,280.2 820.4,266.2 811.1,253.0 802.2,267.8" fill="#333333"/><polygon points="738.4,469.9 747.7,477.0 749.8,461.6 740.1,456.5" fill="#4a4a4a"/><polygon points="740.1,390.2 749.8,385.1 747.7,369.7 738.4,376.8" fill="#4a4a4a"/><polygon points="730.7,451.8 740.1,456.5 741.2,440.6 731.6,438.1" fill="#4d4d4d"/><polygon points="731.6,408.5 741.2,406.1 740.1,390.2 730.7,394.9" fill="#4d4d4d"/><polygon points="763.1,507.3 772.4,517.8 776.7,501.6 766.8,492.8" fill="#424242"/><polygon points="766.8,353.8 776.7,345.0 772.4,328.9 763.1,339.4" fill="#424242"/><polygon points="811.1,593.6 820.0,609.1 830.5,595.2 820.4,580.5" fill="#313131"/><polygon points="820.4,266.2 830.5,251.4 820.0,237.6 811.1,253.0" fill="#313131"/><polygon points="731.6,438.1 741.2,440.6 741.6,423.3 731.9,423.3" fill="#4e4e4e"/><polygon points="731.9,423.3 741.6,423.3 741.2,406.1 731.6,408.5" fill="#4e4e4e"/><polygon points="747.7,477.0 757.2,484.6 759.7,467.1 749.8,461.6" fill="#484848"/><polygon points="749.8,385.1 759.7,379.6 757.2,362.0 747.7,369.7" fill="#484848"/><polygon points="772.4,517.8 781.7,528.9 786.7,511.0 776.7,501.6" fill="#3f3f3f"/><polygon points="776.7,345.0 786.7,335.6 781.7,317.8 772.4,328.9" fill="#3f3f3f"/><polygon points="740.1,456.5 749.8,461.6 751.1,443.2 741.2,440.6" fill="#4b4b4b"/><polygon points="741.2,406.1 751.1,403.4 749.8,385.1 740.1,390.2" fill="#4b4b4b"/><polygon points="741.2,440.6 751.1,443.2 751.6,423.3 741.6,423.3" fill="#4c4c4c"/><polygon points="741.6,423.3 751.6,423.3 751.1,403.4 741.2,406.1" fill="#4c4c4c"/><polygon points="757.2,484.6 766.8,492.8 769.7,473.0 759.7,467.1" fill="#464646"/><polygon points="759.7,379.6 769.7,373.7 766.8,353.8 757.2,362.0" fill="#464646"/><polygon points="781.7,528.9 791.1,540.7 796.9,521.0 786.7,511.0" fill="#3d3d3d"/><polygon points="786.7,335.6 796.9,325.6 791.1,305.9 781.7,317.8" fill="#3d3d3d"/><polygon points="749.8,461.6 759.7,467.1 761.2,446.1 751.1,443.2" fill="#4a4a4a"/><polygon points="751.1,403.4 761.2,400.6 759.7,379.6 749.8,385.1" fill="#494949"/><polygon points="766.8,492.8 776.7,501.6 780.0,479.4 769.7,473.0" fill="#444444"/><polygon points="769.7,373.7 780.0,367.3 776.7,345.0 766.8,353.8" fill="#444444"/><polygon points="791.1,540.7 800.8,553.3 807.3,531.7 796.9,521.0" fill="#3a3a3a"/><polygon points="796.9,325.6 807.3,315.0 800.8,293.4 791.1,305.9" fill="#3a3a3a"/><polygon points="751.1,443.2 761.2,446.1 761.8,423.3 751.6,423.3" fill="#4a4a4a"/><polygon points="751.6,423.3 761.8,423.3 761.2,400.6 751.1,403.4" fill="#4a4a4a"/><polygon points="759.7,467.1 769.7,473.0 771.6,449.2 761.2,446.1" fill="#484848"/><polygon points="761.2,400.6 771.6,397.5 769.7,373.7 759.7,379.6" fill="#484848"/><polygon points="800.8,553.3 810.5,566.5 818.0,543.0 807.3,531.7" fill="#383838"/><polygon points="807.3,315.0 818.0,303.7 810.5,280.2 800.8,293.4" fill="#373737"/><polygon points="776.7,501.6 786.7,511.0 790.6,486.2 780.0,479.4" fill="#414141"/><polygon points="780.0,367.3 790.6,360.5 786.7,335.6 776.7,345.0" fill="#414141"/><polygon points="761.2,446.1 771.6,449.2 772.2,423.3 761.8,423.3" fill="#494949"/><polygon points="761.8,423.3 772.2,423.3 771.6,397.5 761.2,400.6" fill="#494949"/><polygon points="769.7,473.0 780.0,479.4 782.2,452.5 771.6,449.2" fill="#464646"/><polygon points="771.6,397.5 782.2,394.1 780.0,367.3 769.7,373.7" fill="#464646"/><polygon points="810.5,566.5 820.4,580.5 828.9,555.0 818.0,543.0" fill="#353535"/><polygon points="818.0,303.7 828.9,291.7 820.4,266.2 810.5,280.2" fill="#353535"/><polygon points="786.7,511.0 796.9,521.0 801.4,493.4 790.6,486.2" fill="#3f3f3f"/><polygon points="790.6,360.5 801.4,353.2 796.9,325.6 786.7,335.6" fill="#3f3f3f"/><polygon points="771.6,449.2 782.2,452.5 783.0,423.3 772.2,423.3" fill="#474747"/><polygon points="772.2,423.3 783.0,423.3 782.2,394.1 771.6,397.5" fill="#474747"/><polygon points="780.0,479.4 790.6,486.2 793.1,456.1 782.2,452.5" fill="#434343"/><polygon points="782.2,394.1 793.1,390.5 790.6,360.5 780.0,367.3" fill="#434343"/><polygon points="820.4,580.5 830.5,595.2 840.1,567.7 828.9,555.0" fill="#323232"/><polygon points="828.9,291.7 840.1,279.0 830.5,251.4 820.4,266.2" fill="#323232"/><polygon points="796.9,521.0 807.3,531.7 812.5,501.2 801.4,493.4" fill="#3d3d3d"/><polygon points="801.4,353.2 812.5,345.5 807.3,315.0 796.9,325.6" fill="#3d3d3d"/><polygon points="782.2,452.5 793.1,456.1 794.0,423.3 783.0,423.3" fill="#454545"/><polygon points="783.0,423.3 794.0,423.3 793.1,390.5 782.2,394.1" fill="#454545"/><polygon points="790.6,486.2 801.4,493.4 804.4,460.0 793.1,456.1" fill="#414141"/><polygon points="793.1,390.5 804.4,386.7 801.4,353.2 790.6,360.5" fill="#414141"/><polygon points="807.3,531.7 818.0,543.0 824.0,509.5 812.5,501.2" fill="#3a3a3a"/><polygon points="812.5,345.5 824.0,337.2 818.0,303.7 807.3,315.0" fill="#3a3a3a"/><polygon points="793.1,456.1 804.4,460.0 805.4,423.3 794.0,423.3" fill="#434343"/><polygon points="794.0,423.3 805.4,423.3 804.4,386.7 793.1,390.5" fill="#434343"/><polygon points="801.4,493.4 812.5,501.2 815.9,464.1 804.4,460.0" fill="#3f3f3f"/><polygon points="804.4,386.7 815.9,382.6 812.5,345.5 801.4,353.2" fill="#3f3f3f"/><polygon points="818.0,543.0 828.9,555.0 835.7,518.3 824.0,509.5" fill="#383838"/><polygon points="824.0,337.2 835.7,328.4 828.9,291.7 818.0,303.7" fill="#373737"/><polygon points="804.4,460.0 815.9,464.1 817.1,423.3 805.4,423.3" fill="#414141"/><polygon points="805.4,423.3 817.1,423.3 815.9,382.6 804.4,386.7" fill="#414141"/><polygon points="812.5,501.2 824.0,509.5 827.8,468.5 815.9,464.1" fill="#3d3d3d"/><polygon points="815.9,382.6 827.8,378.2 824.0,337.2 812.5,345.5" fill="#3d3d3d"/><polygon points="828.9,555.0 840.1,567.7 847.8,527.7 835.7,518.3" fill="#353535"/><polygon points="835.7,328.4 847.8,319.0 840.1,279.0 828.9,291.7" fill="#353535"/><polygon points="815.9,464.1 827.8,468.5 829.2,423.3 817.1,423.3" fill="#3f3f3f"/><polygon points="817.1,423.3 829.2,423.3 827.8,378.2 815.9,382.6" fill="#3f3f3f"/><polygon points="824.0,509.5 835.7,518.3 840.1,473.1 827.8,468.5" fill="#3b3b3b"/><polygon points="827.8,378.2 840.1,373.5 835.7,328.4 824.0,337.2" fill="#3a3a3a"/><polygon points="827.8,468.5 840.1,473.1 841.7,423.3 829.2,423.3" fill="#3c3c3c"/><polygon points="829.2,423.3 841.7,423.3 840.1,373.5 827.8,378.2" fill="#3c3c3c"/><polygon points="835.7,518.3 847.8,527.7 852.8,478.1 840.1,473.1" fill="#383838"/><polygon points="840.1,373.5 852.8,368.6 847.8,319.0 835.7,328.4" fill="#383838"/><polygon points="840.1,473.1 852.8,478.1 854.6,423.3 841.7,423.3" fill="#3a3a3a"/><polygon points="841.7,423.3 854.6,423.3 852.8,368.6 840.1,373.5" fill="#3a3a3a"/></g></g></g>
<defs><linearGradient id="dg" x1="0" y1="0" x2="1" y2="0"><stop offset="0" stop-color="#101010"/><stop offset="0.5" stop-color="#262626"/><stop offset="1" stop-color="#141414"/></linearGradient><linearGradient id="ag" x1="0" y1="0" x2="1" y2="0"><stop offset="0" stop-color="#6a6a6a"/><stop offset="0.5" stop-color="#9a9a9a"/><stop offset="1" stop-color="#5a5a5a"/></linearGradient></defs><path d="M713.5 413 L724.2 424 L713.5 435 L702.8 424 Z" fill="url(#dg)"/>
</svg>
<span class="t" style="left:404.2px;top:169.62px;font-size:16.67px;color:#c4c4c4;font-family:'Liberation Mono', monospace;">Grid =</span>
<span class="t" style="left:464.2px;top:169.62px;font-size:16.67px;color:#7c7c7c;font-family:'Liberation Mono', monospace;">25x25 = 625</span>
<span class="t" style="left:404.2px;top:189.22px;font-size:16.67px;color:#c4c4c4;font-family:'Liberation Mono', monospace;">Poly =</span>
<span class="t" style="left:464.2px;top:189.22px;font-size:16.67px;color:#7c7c7c;font-family:'Liberation Mono', monospace;">576</span>
<span class="t" style="left:718.5px;top:183.07px;font-size:14px;color:#a8a8a8;font-family:'Liberation Mono', monospace;-webkit-text-stroke:0.3px #a8a8a8;">Y</span>
<span class="t" style="left:723.5px;top:402.07px;font-size:14px;color:#222;font-family:'Liberation Mono', monospace;">Z</span>
<div style="left:940px;top:400px;width:8px;height:25px;overflow:hidden"><span class="t" style="left:3px;top:7px;font-size:14px;color:#8a8a8a;font-family:'Liberation Mono',monospace">X</span></div>
</body></html>
